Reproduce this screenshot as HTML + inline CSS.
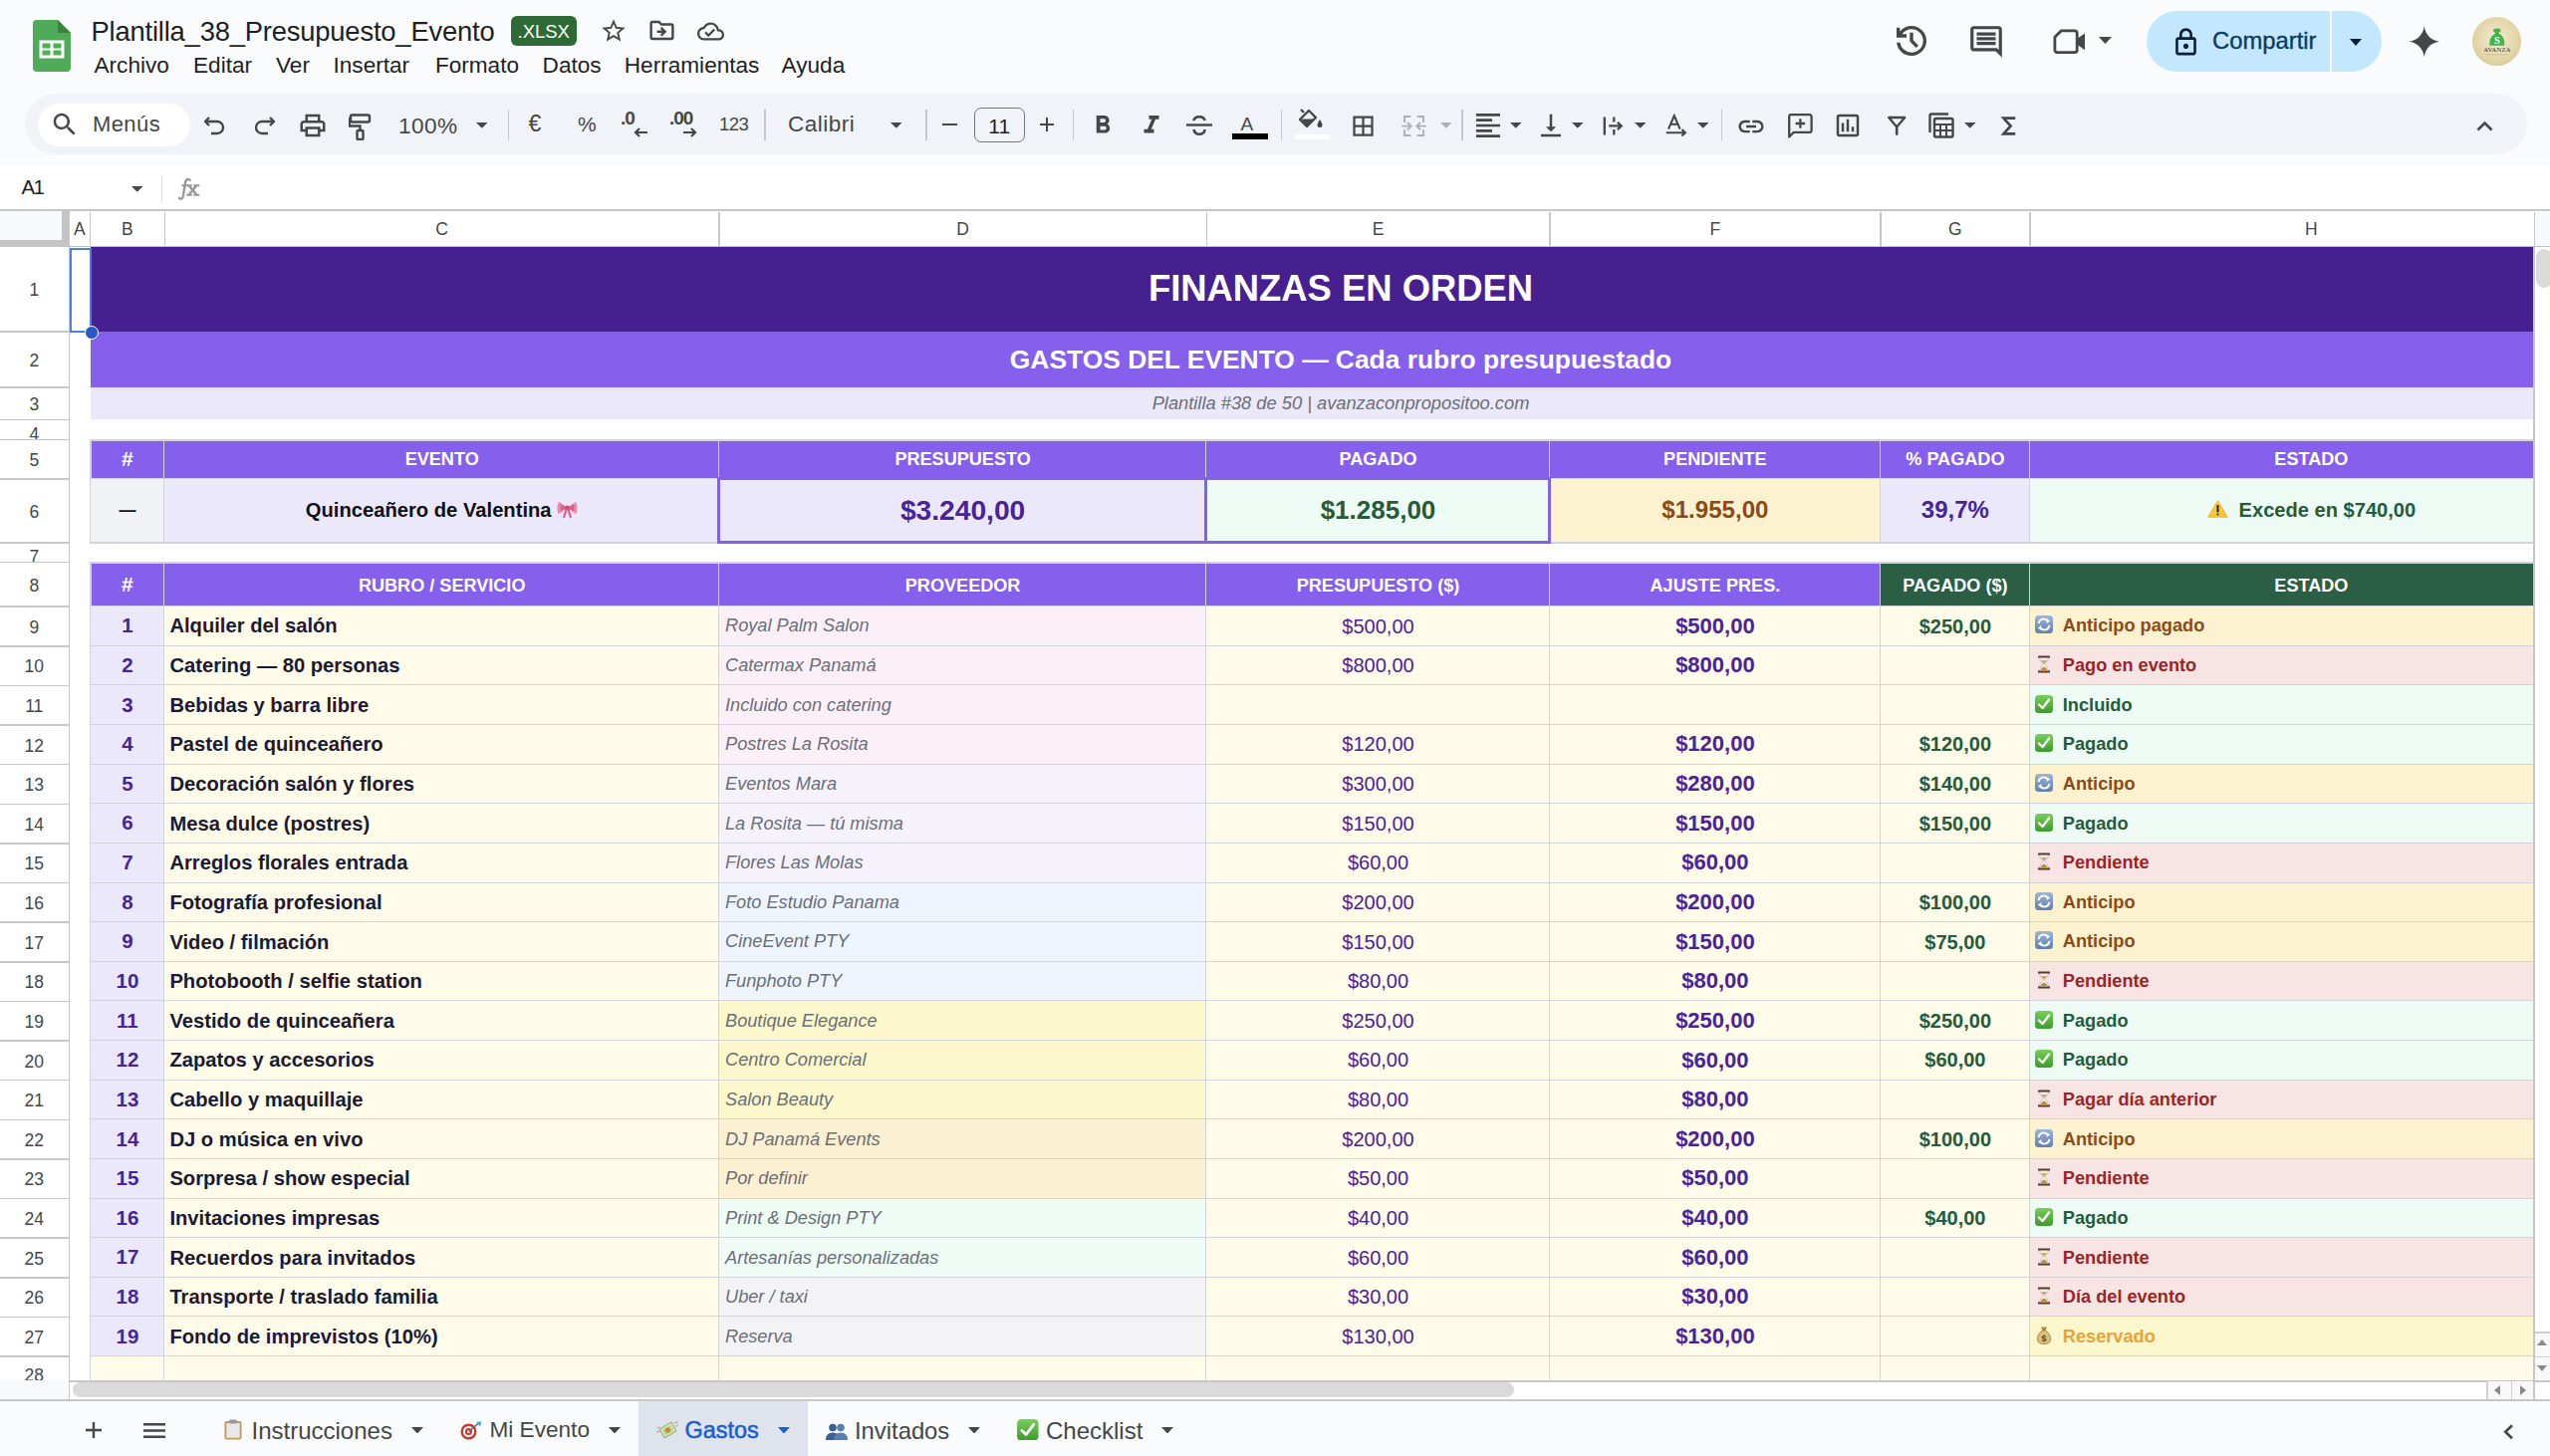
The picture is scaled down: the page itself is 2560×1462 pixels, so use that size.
<!DOCTYPE html><html><head><meta charset="utf-8"><style>
*{margin:0;padding:0;box-sizing:border-box}
html,body{width:2560px;height:1462px;overflow:hidden;background:#f9fbfd;font-family:"Liberation Sans",sans-serif;position:relative}
.t{position:absolute;white-space:nowrap;line-height:1}
.cell{position:absolute;display:flex;align-items:center;white-space:nowrap;overflow:hidden}
.c{justify-content:center}
.ic{position:absolute}
</style></head><body>
<div style="position:absolute;left:0.0px;top:167.0px;width:2560.0px;height:44.0px;background:#fff"></div>
<div style="position:absolute;left:0.0px;top:211.0px;width:2560.0px;height:1175.0px;background:#fff"></div>
<div style="position:absolute;left:0.0px;top:210.0px;width:2560.0px;height:2.0px;background:#c7c7c7"></div>
<div style="position:absolute;left:0.0px;top:212.0px;width:69.5px;height:35.5px;background:#c4c4c4"></div>
<div style="position:absolute;left:0.0px;top:212.0px;width:62.4px;height:29.2px;background:#f8f9fa"></div>
<div style="position:absolute;left:69.0px;top:246.5px;width:2491.0px;height:1.5px;background:#c0c0c0"></div>
<div style="position:absolute;left:68.7px;top:213.0px;width:1.5px;height:34.0px;background:#c7c7c7"></div>
<div class="t" style="left:69.4px;top:221.85px;width:21.099999999999994px;text-align:center;font-size:17.5px;color:#444746">A</div>
<div style="position:absolute;left:89.8px;top:213.0px;width:1.5px;height:34.0px;background:#c7c7c7"></div>
<div class="t" style="left:90.5px;top:221.85px;width:74.9px;text-align:center;font-size:17.5px;color:#444746">B</div>
<div style="position:absolute;left:164.7px;top:213.0px;width:1.5px;height:34.0px;background:#c7c7c7"></div>
<div class="t" style="left:165.4px;top:221.85px;width:556.6px;text-align:center;font-size:17.5px;color:#444746">C</div>
<div style="position:absolute;left:721.2px;top:213.0px;width:1.5px;height:34.0px;background:#c7c7c7"></div>
<div class="t" style="left:722px;top:221.85px;width:489.29999999999995px;text-align:center;font-size:17.5px;color:#444746">D</div>
<div style="position:absolute;left:1210.5px;top:213.0px;width:1.5px;height:34.0px;background:#c7c7c7"></div>
<div class="t" style="left:1211.3px;top:221.85px;width:344.5px;text-align:center;font-size:17.5px;color:#444746">E</div>
<div style="position:absolute;left:1555.0px;top:213.0px;width:1.5px;height:34.0px;background:#c7c7c7"></div>
<div class="t" style="left:1555.8px;top:221.85px;width:332.20000000000005px;text-align:center;font-size:17.5px;color:#444746">F</div>
<div style="position:absolute;left:1887.2px;top:213.0px;width:1.5px;height:34.0px;background:#c7c7c7"></div>
<div class="t" style="left:1888px;top:221.85px;width:149.79999999999995px;text-align:center;font-size:17.5px;color:#444746">G</div>
<div style="position:absolute;left:2037.0px;top:213.0px;width:1.5px;height:34.0px;background:#c7c7c7"></div>
<div class="t" style="left:2037.8px;top:221.85px;width:565.2px;text-align:center;font-size:17.5px;color:#444746">H</div>
<div style="position:absolute;left:2543.5px;top:213.0px;width:1.5px;height:34.0px;background:#c7c7c7"></div>
<div style="position:absolute;left:68.5px;top:248.0px;width:1.5px;height:1138.0px;background:#c7c7c7"></div>
<div style="position:absolute;left:0.0px;top:332.1px;width:69.0px;height:1.5px;background:#c7c7c7"></div>
<div class="t" style="left:0;top:282.90px;width:68.5px;height:49.15px;overflow:hidden;text-align:center;font-size:17.5px;color:#444746">1</div>
<div style="position:absolute;left:0.0px;top:388.2px;width:69.0px;height:1.5px;background:#c7c7c7"></div>
<div class="t" style="left:0;top:353.65px;width:68.5px;height:34.60px;overflow:hidden;text-align:center;font-size:17.5px;color:#444746">2</div>
<div style="position:absolute;left:0.0px;top:420.5px;width:69.0px;height:1.5px;background:#c7c7c7"></div>
<div class="t" style="left:0;top:397.88px;width:68.5px;height:22.62px;overflow:hidden;text-align:center;font-size:17.5px;color:#444746">3</div>
<div style="position:absolute;left:0.0px;top:440.9px;width:69.0px;height:1.5px;background:#c7c7c7"></div>
<div class="t" style="left:0;top:427.60px;width:68.5px;height:13.25px;overflow:hidden;text-align:center;font-size:17.5px;color:#444746">4</div>
<div style="position:absolute;left:0.0px;top:480.1px;width:69.0px;height:1.5px;background:#c7c7c7"></div>
<div class="t" style="left:0;top:453.95px;width:68.5px;height:26.10px;overflow:hidden;text-align:center;font-size:17.5px;color:#444746">5</div>
<div style="position:absolute;left:0.0px;top:544.0px;width:69.0px;height:1.5px;background:#c7c7c7"></div>
<div class="t" style="left:0;top:505.50px;width:68.5px;height:38.45px;overflow:hidden;text-align:center;font-size:17.5px;color:#444746">6</div>
<div style="position:absolute;left:0.0px;top:563.9px;width:69.0px;height:1.5px;background:#c7c7c7"></div>
<div class="t" style="left:0;top:551.05px;width:68.5px;height:12.80px;overflow:hidden;text-align:center;font-size:17.5px;color:#444746">7</div>
<div style="position:absolute;left:0.0px;top:608.4px;width:69.0px;height:1.5px;background:#c7c7c7"></div>
<div class="t" style="left:0;top:579.60px;width:68.5px;height:28.75px;overflow:hidden;text-align:center;font-size:17.5px;color:#444746">8</div>
<div style="position:absolute;left:0.0px;top:648.0px;width:69.0px;height:1.5px;background:#c7c7c7"></div>
<div class="t" style="left:0;top:621.65px;width:68.5px;height:26.30px;overflow:hidden;text-align:center;font-size:17.5px;color:#444746">9</div>
<div style="position:absolute;left:0.0px;top:687.6px;width:69.0px;height:1.5px;background:#c7c7c7"></div>
<div class="t" style="left:0;top:661.27px;width:68.5px;height:26.31px;overflow:hidden;text-align:center;font-size:17.5px;color:#444746">10</div>
<div style="position:absolute;left:0.0px;top:727.2px;width:69.0px;height:1.5px;background:#c7c7c7"></div>
<div class="t" style="left:0;top:700.90px;width:68.5px;height:26.31px;overflow:hidden;text-align:center;font-size:17.5px;color:#444746">11</div>
<div style="position:absolute;left:0.0px;top:766.8px;width:69.0px;height:1.5px;background:#c7c7c7"></div>
<div class="t" style="left:0;top:740.53px;width:68.5px;height:26.31px;overflow:hidden;text-align:center;font-size:17.5px;color:#444746">12</div>
<div style="position:absolute;left:0.0px;top:806.5px;width:69.0px;height:1.5px;background:#c7c7c7"></div>
<div class="t" style="left:0;top:780.16px;width:68.5px;height:26.31px;overflow:hidden;text-align:center;font-size:17.5px;color:#444746">13</div>
<div style="position:absolute;left:0.0px;top:846.1px;width:69.0px;height:1.5px;background:#c7c7c7"></div>
<div class="t" style="left:0;top:819.79px;width:68.5px;height:26.31px;overflow:hidden;text-align:center;font-size:17.5px;color:#444746">14</div>
<div style="position:absolute;left:0.0px;top:885.7px;width:69.0px;height:1.5px;background:#c7c7c7"></div>
<div class="t" style="left:0;top:859.42px;width:68.5px;height:26.31px;overflow:hidden;text-align:center;font-size:17.5px;color:#444746">15</div>
<div style="position:absolute;left:0.0px;top:925.4px;width:69.0px;height:1.5px;background:#c7c7c7"></div>
<div class="t" style="left:0;top:899.05px;width:68.5px;height:26.31px;overflow:hidden;text-align:center;font-size:17.5px;color:#444746">16</div>
<div style="position:absolute;left:0.0px;top:965.0px;width:69.0px;height:1.5px;background:#c7c7c7"></div>
<div class="t" style="left:0;top:938.68px;width:68.5px;height:26.31px;overflow:hidden;text-align:center;font-size:17.5px;color:#444746">17</div>
<div style="position:absolute;left:0.0px;top:1004.6px;width:69.0px;height:1.5px;background:#c7c7c7"></div>
<div class="t" style="left:0;top:978.31px;width:68.5px;height:26.31px;overflow:hidden;text-align:center;font-size:17.5px;color:#444746">18</div>
<div style="position:absolute;left:0.0px;top:1044.2px;width:69.0px;height:1.5px;background:#c7c7c7"></div>
<div class="t" style="left:0;top:1017.94px;width:68.5px;height:26.31px;overflow:hidden;text-align:center;font-size:17.5px;color:#444746">19</div>
<div style="position:absolute;left:0.0px;top:1083.9px;width:69.0px;height:1.5px;background:#c7c7c7"></div>
<div class="t" style="left:0;top:1057.57px;width:68.5px;height:26.31px;overflow:hidden;text-align:center;font-size:17.5px;color:#444746">20</div>
<div style="position:absolute;left:0.0px;top:1123.5px;width:69.0px;height:1.5px;background:#c7c7c7"></div>
<div class="t" style="left:0;top:1097.20px;width:68.5px;height:26.31px;overflow:hidden;text-align:center;font-size:17.5px;color:#444746">21</div>
<div style="position:absolute;left:0.0px;top:1163.1px;width:69.0px;height:1.5px;background:#c7c7c7"></div>
<div class="t" style="left:0;top:1136.83px;width:68.5px;height:26.31px;overflow:hidden;text-align:center;font-size:17.5px;color:#444746">22</div>
<div style="position:absolute;left:0.0px;top:1202.8px;width:69.0px;height:1.5px;background:#c7c7c7"></div>
<div class="t" style="left:0;top:1176.46px;width:68.5px;height:26.31px;overflow:hidden;text-align:center;font-size:17.5px;color:#444746">23</div>
<div style="position:absolute;left:0.0px;top:1242.4px;width:69.0px;height:1.5px;background:#c7c7c7"></div>
<div class="t" style="left:0;top:1216.09px;width:68.5px;height:26.31px;overflow:hidden;text-align:center;font-size:17.5px;color:#444746">24</div>
<div style="position:absolute;left:0.0px;top:1282.0px;width:69.0px;height:1.5px;background:#c7c7c7"></div>
<div class="t" style="left:0;top:1255.72px;width:68.5px;height:26.31px;overflow:hidden;text-align:center;font-size:17.5px;color:#444746">25</div>
<div style="position:absolute;left:0.0px;top:1321.7px;width:69.0px;height:1.5px;background:#c7c7c7"></div>
<div class="t" style="left:0;top:1295.35px;width:68.5px;height:26.31px;overflow:hidden;text-align:center;font-size:17.5px;color:#444746">26</div>
<div style="position:absolute;left:0.0px;top:1361.3px;width:69.0px;height:1.5px;background:#c7c7c7"></div>
<div class="t" style="left:0;top:1334.98px;width:68.5px;height:26.31px;overflow:hidden;text-align:center;font-size:17.5px;color:#444746">27</div>
<div style="position:absolute;left:0.0px;top:1400.9px;width:69.0px;height:1.5px;background:#c7c7c7"></div>
<div class="t" style="left:0;top:1372.75px;width:68.5px;height:28.17px;overflow:hidden;text-align:center;font-size:17.5px;color:#444746">28</div>
<div style="position:absolute;left:90.5px;top:248.0px;width:2453.0px;height:84.8px;background:#47208f"></div>
<div class="t" style="left:946px;top:272.2px;width:800px;text-align:center;color:#fff;font-weight:bold;font-size:36.4px">FINANZAS EN ORDEN</div>
<div style="position:absolute;left:90.5px;top:332.8px;width:2453.0px;height:56.2px;background:#8560ec"></div>
<div class="t" style="left:946px;top:347.8px;width:800px;text-align:center;color:#fff;font-weight:bold;font-size:26.4px">GASTOS DEL EVENTO — Cada rubro presupuestado</div>
<div style="position:absolute;left:90.5px;top:389.0px;width:2453.0px;height:32.2px;background:#ece8fb"></div>
<div class="t" style="left:946px;top:396.1px;width:800px;text-align:center;color:#6b6f76;font-style:italic;font-size:18.3px">Plantilla #38 de 50 | avanzaconpropositoo.com</div>
<div style="position:absolute;left:90.5px;top:441.6px;width:74.9px;height:39.2px;background:#8560ec"></div>
<div style="position:absolute;left:164.4px;top:440.6px;width:2.0px;height:41.2px;background:#d3d3dc"></div>
<div style="position:absolute;left:89.5px;top:479.8px;width:76.9px;height:2.0px;background:#d3d3dc"></div>
<div class="t" style="left:-272.1px;top:449.9px;width:800px;text-align:center;font-size:21px;color:#fff;font-weight:bold">#</div>
<div style="position:absolute;left:165.4px;top:441.6px;width:556.6px;height:39.2px;background:#8560ec"></div>
<div style="position:absolute;left:721.0px;top:440.6px;width:2.0px;height:41.2px;background:#d3d3dc"></div>
<div style="position:absolute;left:164.4px;top:479.8px;width:558.6px;height:2.0px;background:#d3d3dc"></div>
<div class="t" style="left:43.7px;top:452.4px;width:800px;text-align:center;font-size:18.1px;color:#fff;font-weight:bold">EVENTO</div>
<div style="position:absolute;left:722.0px;top:441.6px;width:489.3px;height:39.2px;background:#8560ec"></div>
<div style="position:absolute;left:1210.3px;top:440.6px;width:2.0px;height:41.2px;background:#d3d3dc"></div>
<div style="position:absolute;left:721.0px;top:479.8px;width:491.3px;height:2.0px;background:#d3d3dc"></div>
<div class="t" style="left:566.6px;top:452.4px;width:800px;text-align:center;font-size:18.1px;color:#fff;font-weight:bold">PRESUPUESTO</div>
<div style="position:absolute;left:1211.3px;top:441.6px;width:344.5px;height:39.2px;background:#8560ec"></div>
<div style="position:absolute;left:1554.8px;top:440.6px;width:2.0px;height:41.2px;background:#d3d3dc"></div>
<div style="position:absolute;left:1210.3px;top:479.8px;width:346.5px;height:2.0px;background:#d3d3dc"></div>
<div class="t" style="left:983.5px;top:452.4px;width:800px;text-align:center;font-size:18.1px;color:#fff;font-weight:bold">PAGADO</div>
<div style="position:absolute;left:1555.8px;top:441.6px;width:332.2px;height:39.2px;background:#8560ec"></div>
<div style="position:absolute;left:1887.0px;top:440.6px;width:2.0px;height:41.2px;background:#d3d3dc"></div>
<div style="position:absolute;left:1554.8px;top:479.8px;width:334.2px;height:2.0px;background:#d3d3dc"></div>
<div class="t" style="left:1321.9px;top:452.4px;width:800px;text-align:center;font-size:18.1px;color:#fff;font-weight:bold">PENDIENTE</div>
<div style="position:absolute;left:1888.0px;top:441.6px;width:149.8px;height:39.2px;background:#8560ec"></div>
<div style="position:absolute;left:2036.8px;top:440.6px;width:2.0px;height:41.2px;background:#d3d3dc"></div>
<div style="position:absolute;left:1887.0px;top:479.8px;width:151.8px;height:2.0px;background:#d3d3dc"></div>
<div class="t" style="left:1562.9px;top:452.4px;width:800px;text-align:center;font-size:18.1px;color:#fff;font-weight:bold">% PAGADO</div>
<div style="position:absolute;left:2037.8px;top:441.6px;width:505.7px;height:39.2px;background:#8560ec"></div>
<div style="position:absolute;left:2542.5px;top:440.6px;width:2.0px;height:41.2px;background:#d3d3dc"></div>
<div style="position:absolute;left:2036.8px;top:479.8px;width:507.7px;height:2.0px;background:#d3d3dc"></div>
<div class="t" style="left:1920.4px;top:452.4px;width:800px;text-align:center;font-size:18.1px;color:#fff;font-weight:bold">ESTADO</div>
<div style="position:absolute;left:89.5px;top:440.6px;width:2454.0px;height:2.0px;background:#d3d3dc"></div>
<div style="position:absolute;left:89.5px;top:440.6px;width:2.0px;height:105.0px;background:#d3d3dc"></div>
<div style="position:absolute;left:90.5px;top:480.8px;width:74.9px;height:63.9px;background:#f1f2f5"></div>
<div style="position:absolute;left:164.4px;top:479.8px;width:2.0px;height:65.9px;background:#d3d3dc"></div>
<div style="position:absolute;left:89.5px;top:543.7px;width:76.9px;height:2.0px;background:#d3d3dc"></div>
<div class="t" style="left:-272.1px;top:503.8px;width:800px;text-align:center;font-size:17px;color:#111;font-weight:bold">—</div>
<div style="position:absolute;left:165.4px;top:480.8px;width:556.6px;height:63.9px;background:#ece8fb"></div>
<div style="position:absolute;left:721.0px;top:479.8px;width:2.0px;height:65.9px;background:#d3d3dc"></div>
<div style="position:absolute;left:164.4px;top:543.7px;width:558.6px;height:2.0px;background:#d3d3dc"></div>
<div class="t" style="left:43.7px;top:502.3px;width:800px;text-align:center;font-size:20.2px;color:#111;font-weight:bold">Quinceañero de Valentina<svg width="23" height="19" viewBox="0 0 23 19" style="vertical-align:-2px;margin-left:4px"><path d="M11.5 8 L3 1.5 Q0 8 2.5 14.5 Z" fill="#eb8db0"/><path d="M11.5 8 L20 1.5 Q23 8 20.5 14.5 Z" fill="#eb8db0"/><path d="M11.5 8 L5 4 Q4 8 5 11.5 Z M11.5 8 L18 4 Q19 8 18 11.5 Z" fill="#d9638d"/><circle cx="11.5" cy="8" r="2.5" fill="#c94f7a"/><path d="M10.5 9.5 L8 18 M12.5 9.5 L15 18" stroke="#d9638d" stroke-width="2.2"/></svg></div>
<div style="position:absolute;left:722.0px;top:480.8px;width:489.3px;height:63.9px;background:#ece8fb"></div>
<div style="position:absolute;left:1210.3px;top:479.8px;width:2.0px;height:65.9px;background:#d3d3dc"></div>
<div style="position:absolute;left:721.0px;top:543.7px;width:491.3px;height:2.0px;background:#d3d3dc"></div>
<div class="t" style="left:566.6px;top:498.4px;width:800px;text-align:center;font-size:28.2px;color:#4a2398;font-weight:bold">$3.240,00</div>
<div style="position:absolute;left:1211.3px;top:480.8px;width:344.5px;height:63.9px;background:#eefbf4"></div>
<div style="position:absolute;left:1554.8px;top:479.8px;width:2.0px;height:65.9px;background:#d3d3dc"></div>
<div style="position:absolute;left:1210.3px;top:543.7px;width:346.5px;height:2.0px;background:#d3d3dc"></div>
<div class="t" style="left:983.5px;top:499.4px;width:800px;text-align:center;font-size:26px;color:#245c3b;font-weight:bold">$1.285,00</div>
<div style="position:absolute;left:1555.8px;top:480.8px;width:332.2px;height:63.9px;background:#fcf2d0"></div>
<div style="position:absolute;left:1887.0px;top:479.8px;width:2.0px;height:65.9px;background:#d3d3dc"></div>
<div style="position:absolute;left:1554.8px;top:543.7px;width:334.2px;height:2.0px;background:#d3d3dc"></div>
<div class="t" style="left:1321.9px;top:500.4px;width:800px;text-align:center;font-size:24.1px;color:#8c4a17;font-weight:bold">$1.955,00</div>
<div style="position:absolute;left:1888.0px;top:480.8px;width:149.8px;height:63.9px;background:#ece8fb"></div>
<div style="position:absolute;left:2036.8px;top:479.8px;width:2.0px;height:65.9px;background:#d3d3dc"></div>
<div style="position:absolute;left:1887.0px;top:543.7px;width:151.8px;height:2.0px;background:#d3d3dc"></div>
<div class="t" style="left:1562.9px;top:500.4px;width:800px;text-align:center;font-size:24px;color:#4a2398;font-weight:bold">39,7%</div>
<div style="position:absolute;left:2037.8px;top:480.8px;width:505.7px;height:63.9px;background:#eefbf4"></div>
<div style="position:absolute;left:2542.5px;top:479.8px;width:2.0px;height:65.9px;background:#d3d3dc"></div>
<div style="position:absolute;left:2036.8px;top:543.7px;width:507.7px;height:2.0px;background:#d3d3dc"></div>
<div class="t" style="left:1920.4px;top:502.3px;width:800px;text-align:center;font-size:20.1px;color:#245c3b;font-weight:bold"><svg width="21" height="18" viewBox="0 0 21 18" style="vertical-align:-1px;margin-right:11px"><path d="M10.5 0.8 L20.3 17.2 L0.7 17.2 Z" fill="#f5c63a" stroke="#f0b52a" stroke-width="1" stroke-linejoin="round"/><rect x="9.5" y="5" width="2" height="7.5" rx="0.8" fill="#222"/><rect x="9.5" y="13.6" width="2" height="2" rx="1" fill="#222"/></svg>Excede en $740,00</div>
<div style="position:absolute;left:719.9px;top:479.3px;width:837.4px;height:66.5px;border:3px solid #8361e6"></div>
<div style="position:absolute;left:1209.1px;top:479.3px;width:3.0px;height:66.5px;background:#8361e6"></div>
<div style="position:absolute;left:90.5px;top:564.6px;width:74.9px;height:44.5px;background:#8560ec"></div>
<div style="position:absolute;left:164.4px;top:563.6px;width:2.0px;height:46.5px;background:#d3d3dc"></div>
<div style="position:absolute;left:89.5px;top:608.1px;width:76.9px;height:2.0px;background:#d3d3dc"></div>
<div class="t" style="left:-272.1px;top:576.1px;width:800px;text-align:center;font-size:21px;color:#fff;font-weight:bold">#</div>
<div style="position:absolute;left:165.4px;top:564.6px;width:556.6px;height:44.5px;background:#8560ec"></div>
<div style="position:absolute;left:721.0px;top:563.6px;width:2.0px;height:46.5px;background:#d3d3dc"></div>
<div style="position:absolute;left:164.4px;top:608.1px;width:558.6px;height:2.0px;background:#d3d3dc"></div>
<div class="t" style="left:43.7px;top:578.5px;width:800px;text-align:center;font-size:18.1px;color:#fff;font-weight:bold">RUBRO / SERVICIO</div>
<div style="position:absolute;left:722.0px;top:564.6px;width:489.3px;height:44.5px;background:#8560ec"></div>
<div style="position:absolute;left:1210.3px;top:563.6px;width:2.0px;height:46.5px;background:#d3d3dc"></div>
<div style="position:absolute;left:721.0px;top:608.1px;width:491.3px;height:2.0px;background:#d3d3dc"></div>
<div class="t" style="left:566.6px;top:578.5px;width:800px;text-align:center;font-size:18.1px;color:#fff;font-weight:bold">PROVEEDOR</div>
<div style="position:absolute;left:1211.3px;top:564.6px;width:344.5px;height:44.5px;background:#8560ec"></div>
<div style="position:absolute;left:1554.8px;top:563.6px;width:2.0px;height:46.5px;background:#d3d3dc"></div>
<div style="position:absolute;left:1210.3px;top:608.1px;width:346.5px;height:2.0px;background:#d3d3dc"></div>
<div class="t" style="left:983.5px;top:578.5px;width:800px;text-align:center;font-size:18.1px;color:#fff;font-weight:bold">PRESUPUESTO ($)</div>
<div style="position:absolute;left:1555.8px;top:564.6px;width:332.2px;height:44.5px;background:#8560ec"></div>
<div style="position:absolute;left:1887.0px;top:563.6px;width:2.0px;height:46.5px;background:#d3d3dc"></div>
<div style="position:absolute;left:1554.8px;top:608.1px;width:334.2px;height:2.0px;background:#d3d3dc"></div>
<div class="t" style="left:1321.9px;top:578.5px;width:800px;text-align:center;font-size:18.1px;color:#fff;font-weight:bold">AJUSTE PRES.</div>
<div style="position:absolute;left:1888.0px;top:564.6px;width:149.8px;height:44.5px;background:#2a5e45"></div>
<div style="position:absolute;left:2036.8px;top:563.6px;width:2.0px;height:46.5px;background:#d3d3dc"></div>
<div style="position:absolute;left:1887.0px;top:608.1px;width:151.8px;height:2.0px;background:#d3d3dc"></div>
<div class="t" style="left:1562.9px;top:578.5px;width:800px;text-align:center;font-size:18.1px;color:#fff;font-weight:bold">PAGADO ($)</div>
<div style="position:absolute;left:2037.8px;top:564.6px;width:505.7px;height:44.5px;background:#2a5e45"></div>
<div style="position:absolute;left:2542.5px;top:563.6px;width:2.0px;height:46.5px;background:#d3d3dc"></div>
<div style="position:absolute;left:2036.8px;top:608.1px;width:507.7px;height:2.0px;background:#d3d3dc"></div>
<div class="t" style="left:1920.4px;top:578.5px;width:800px;text-align:center;font-size:18.1px;color:#fff;font-weight:bold">ESTADO</div>
<div style="position:absolute;left:89.5px;top:563.6px;width:2454.0px;height:2.0px;background:#d3d3dc"></div>
<div style="position:absolute;left:89.5px;top:563.6px;width:2.0px;height:823.0px;background:#d3d3dc"></div>
<div style="position:absolute;left:90.5px;top:609.1px;width:74.9px;height:39.6px;background:#ece8fb"></div>
<div style="position:absolute;left:164.4px;top:608.1px;width:2.0px;height:41.6px;background:#d3d3dc"></div>
<div style="position:absolute;left:89.5px;top:647.7px;width:76.9px;height:2.0px;background:#d3d3dc"></div>
<div class="t" style="left:-272.1px;top:618.3px;width:800px;text-align:center;font-size:20.5px;color:#4a2398;font-weight:bold">1</div>
<div style="position:absolute;left:165.4px;top:609.1px;width:556.6px;height:39.6px;background:#fefbe9"></div>
<div style="position:absolute;left:721.0px;top:608.1px;width:2.0px;height:41.6px;background:#d3d3dc"></div>
<div style="position:absolute;left:164.4px;top:647.7px;width:558.6px;height:2.0px;background:#d3d3dc"></div>
<div class="t" style="left:170.4px;top:618.4px;font-size:20.2px;color:#1c1a33;font-weight:bold">Alquiler del salón</div>
<div style="position:absolute;left:722.0px;top:609.1px;width:489.3px;height:39.6px;background:#fbf0f7"></div>
<div style="position:absolute;left:1210.3px;top:608.1px;width:2.0px;height:41.6px;background:#d3d3dc"></div>
<div style="position:absolute;left:721.0px;top:647.7px;width:491.3px;height:2.0px;background:#d3d3dc"></div>
<div class="t" style="left:728.0px;top:619.4px;font-size:18.2px;color:#6b6f78;font-style:italic">Royal Palm Salon</div>
<div style="position:absolute;left:1211.3px;top:609.1px;width:344.5px;height:39.6px;background:#fefbe9"></div>
<div style="position:absolute;left:1554.8px;top:608.1px;width:2.0px;height:41.6px;background:#d3d3dc"></div>
<div style="position:absolute;left:1210.3px;top:647.7px;width:346.5px;height:2.0px;background:#d3d3dc"></div>
<div class="t" style="left:983.5px;top:618.5px;width:800px;text-align:center;font-size:20px;color:#4a2398">$500,00</div>
<div style="position:absolute;left:1555.8px;top:609.1px;width:332.2px;height:39.6px;background:#fefbe9"></div>
<div style="position:absolute;left:1887.0px;top:608.1px;width:2.0px;height:41.6px;background:#d3d3dc"></div>
<div style="position:absolute;left:1554.8px;top:647.7px;width:334.2px;height:2.0px;background:#d3d3dc"></div>
<div class="t" style="left:1321.9px;top:617.6px;width:800px;text-align:center;font-size:22px;color:#4a2398;font-weight:bold">$500,00</div>
<div style="position:absolute;left:1888.0px;top:609.1px;width:149.8px;height:39.6px;background:#fefbe9"></div>
<div style="position:absolute;left:2036.8px;top:608.1px;width:2.0px;height:41.6px;background:#d3d3dc"></div>
<div style="position:absolute;left:1887.0px;top:647.7px;width:151.8px;height:2.0px;background:#d3d3dc"></div>
<div class="t" style="left:1562.9px;top:618.5px;width:800px;text-align:center;font-size:20px;color:#245c3b;font-weight:bold">$250,00</div>
<div style="position:absolute;left:2037.8px;top:609.1px;width:505.7px;height:39.6px;background:#fcf2d0"></div>
<div style="position:absolute;left:2542.5px;top:608.1px;width:2.0px;height:41.6px;background:#d3d3dc"></div>
<div style="position:absolute;left:2036.8px;top:647.7px;width:507.7px;height:2.0px;background:#d3d3dc"></div>
<div class="t" style="left:2042.8px;top:618.4px;font-size:18.2px;color:#8c4a17;font-weight:bold"><svg width="18" height="18" viewBox="0 0 18 18" style="vertical-align:-2px;margin-right:10px"><defs><linearGradient id="gs" x1="0" y1="0" x2="0" y2="1"><stop offset="0" stop-color="#9db5d8"/><stop offset="1" stop-color="#5f7fae"/></linearGradient></defs><rect x="0" y="0" width="18" height="18" rx="3.5" fill="url(#gs)"/><path d="M3.6 8.2 A5.2 5.2 0 0 1 13 5.6" stroke="#fff" stroke-width="2" fill="none"/><path d="M14.4 9.8 A5.2 5.2 0 0 1 5 12.4" stroke="#fff" stroke-width="2" fill="none"/><path d="M11.2 3.2 L15.2 5.2 L11.8 8 Z" fill="#fff"/><path d="M6.8 14.8 L2.8 12.8 L6.2 10 Z" fill="#fff"/></svg>Anticipo pagado</div>
<div style="position:absolute;left:90.5px;top:648.7px;width:74.9px;height:39.6px;background:#ece8fb"></div>
<div style="position:absolute;left:164.4px;top:647.7px;width:2.0px;height:41.6px;background:#d3d3dc"></div>
<div style="position:absolute;left:89.5px;top:687.3px;width:76.9px;height:2.0px;background:#d3d3dc"></div>
<div class="t" style="left:-272.1px;top:657.9px;width:800px;text-align:center;font-size:20.5px;color:#4a2398;font-weight:bold">2</div>
<div style="position:absolute;left:165.4px;top:648.7px;width:556.6px;height:39.6px;background:#fefbe9"></div>
<div style="position:absolute;left:721.0px;top:647.7px;width:2.0px;height:41.6px;background:#d3d3dc"></div>
<div style="position:absolute;left:164.4px;top:687.3px;width:558.6px;height:2.0px;background:#d3d3dc"></div>
<div class="t" style="left:170.4px;top:658.0px;font-size:20.2px;color:#1c1a33;font-weight:bold">Catering — 80 personas</div>
<div style="position:absolute;left:722.0px;top:648.7px;width:489.3px;height:39.6px;background:#fbf0f7"></div>
<div style="position:absolute;left:1210.3px;top:647.7px;width:2.0px;height:41.6px;background:#d3d3dc"></div>
<div style="position:absolute;left:721.0px;top:687.3px;width:491.3px;height:2.0px;background:#d3d3dc"></div>
<div class="t" style="left:728.0px;top:659.0px;font-size:18.2px;color:#6b6f78;font-style:italic">Catermax Panamá</div>
<div style="position:absolute;left:1211.3px;top:648.7px;width:344.5px;height:39.6px;background:#fefbe9"></div>
<div style="position:absolute;left:1554.8px;top:647.7px;width:2.0px;height:41.6px;background:#d3d3dc"></div>
<div style="position:absolute;left:1210.3px;top:687.3px;width:346.5px;height:2.0px;background:#d3d3dc"></div>
<div class="t" style="left:983.5px;top:658.1px;width:800px;text-align:center;font-size:20px;color:#4a2398">$800,00</div>
<div style="position:absolute;left:1555.8px;top:648.7px;width:332.2px;height:39.6px;background:#fefbe9"></div>
<div style="position:absolute;left:1887.0px;top:647.7px;width:2.0px;height:41.6px;background:#d3d3dc"></div>
<div style="position:absolute;left:1554.8px;top:687.3px;width:334.2px;height:2.0px;background:#d3d3dc"></div>
<div class="t" style="left:1321.9px;top:657.2px;width:800px;text-align:center;font-size:22px;color:#4a2398;font-weight:bold">$800,00</div>
<div style="position:absolute;left:1888.0px;top:648.7px;width:149.8px;height:39.6px;background:#fefbe9"></div>
<div style="position:absolute;left:2036.8px;top:647.7px;width:2.0px;height:41.6px;background:#d3d3dc"></div>
<div style="position:absolute;left:1887.0px;top:687.3px;width:151.8px;height:2.0px;background:#d3d3dc"></div>
<div class="t" style="left:1562.9px;top:658.1px;width:800px;text-align:center;font-size:20px;color:#245c3b;font-weight:bold"></div>
<div style="position:absolute;left:2037.8px;top:648.7px;width:505.7px;height:39.6px;background:#f9e4e4"></div>
<div style="position:absolute;left:2542.5px;top:647.7px;width:2.0px;height:41.6px;background:#d3d3dc"></div>
<div style="position:absolute;left:2036.8px;top:687.3px;width:507.7px;height:2.0px;background:#d3d3dc"></div>
<div class="t" style="left:2042.8px;top:658.0px;font-size:18.2px;color:#9a2525;font-weight:bold"><svg width="18" height="18" viewBox="0 0 18 18" style="vertical-align:-2px;margin-right:10px"><rect x="3" y="0.5" width="12" height="2.2" rx="0.6" fill="#5a3a22"/><rect x="3" y="15.3" width="12" height="2.2" rx="0.6" fill="#5a3a22"/><path d="M4.5 2.7 L13.5 2.7 Q13 7 9.6 9 Q13 11 13.5 15.3 L4.5 15.3 Q5 11 8.4 9 Q5 7 4.5 2.7 Z" fill="#f2f2f2" stroke="#aaa" stroke-width="0.6"/><path d="M6.2 5 L11.8 5 Q11 7.5 9 8.6 Q7 7.5 6.2 5 Z" fill="#d8a25e"/><path d="M5.5 15 Q6.5 12 9 11.5 Q11.5 12 12.5 15 Z" fill="#c58a40"/></svg>Pago en evento</div>
<div style="position:absolute;left:90.5px;top:688.3px;width:74.9px;height:39.6px;background:#ece8fb"></div>
<div style="position:absolute;left:164.4px;top:687.3px;width:2.0px;height:41.6px;background:#d3d3dc"></div>
<div style="position:absolute;left:89.5px;top:727.0px;width:76.9px;height:2.0px;background:#d3d3dc"></div>
<div class="t" style="left:-272.1px;top:697.5px;width:800px;text-align:center;font-size:20.5px;color:#4a2398;font-weight:bold">3</div>
<div style="position:absolute;left:165.4px;top:688.3px;width:556.6px;height:39.6px;background:#fefbe9"></div>
<div style="position:absolute;left:721.0px;top:687.3px;width:2.0px;height:41.6px;background:#d3d3dc"></div>
<div style="position:absolute;left:164.4px;top:727.0px;width:558.6px;height:2.0px;background:#d3d3dc"></div>
<div class="t" style="left:170.4px;top:697.7px;font-size:20.2px;color:#1c1a33;font-weight:bold">Bebidas y barra libre</div>
<div style="position:absolute;left:722.0px;top:688.3px;width:489.3px;height:39.6px;background:#fbf0f7"></div>
<div style="position:absolute;left:1210.3px;top:687.3px;width:2.0px;height:41.6px;background:#d3d3dc"></div>
<div style="position:absolute;left:721.0px;top:727.0px;width:491.3px;height:2.0px;background:#d3d3dc"></div>
<div class="t" style="left:728.0px;top:698.7px;font-size:18.2px;color:#6b6f78;font-style:italic">Incluido con catering</div>
<div style="position:absolute;left:1211.3px;top:688.3px;width:344.5px;height:39.6px;background:#fefbe9"></div>
<div style="position:absolute;left:1554.8px;top:687.3px;width:2.0px;height:41.6px;background:#d3d3dc"></div>
<div style="position:absolute;left:1210.3px;top:727.0px;width:346.5px;height:2.0px;background:#d3d3dc"></div>
<div class="t" style="left:983.5px;top:697.8px;width:800px;text-align:center;font-size:20px;color:#4a2398"></div>
<div style="position:absolute;left:1555.8px;top:688.3px;width:332.2px;height:39.6px;background:#fefbe9"></div>
<div style="position:absolute;left:1887.0px;top:687.3px;width:2.0px;height:41.6px;background:#d3d3dc"></div>
<div style="position:absolute;left:1554.8px;top:727.0px;width:334.2px;height:2.0px;background:#d3d3dc"></div>
<div class="t" style="left:1321.9px;top:696.8px;width:800px;text-align:center;font-size:22px;color:#4a2398;font-weight:bold"></div>
<div style="position:absolute;left:1888.0px;top:688.3px;width:149.8px;height:39.6px;background:#fefbe9"></div>
<div style="position:absolute;left:2036.8px;top:687.3px;width:2.0px;height:41.6px;background:#d3d3dc"></div>
<div style="position:absolute;left:1887.0px;top:727.0px;width:151.8px;height:2.0px;background:#d3d3dc"></div>
<div class="t" style="left:1562.9px;top:697.8px;width:800px;text-align:center;font-size:20px;color:#245c3b;font-weight:bold"></div>
<div style="position:absolute;left:2037.8px;top:688.3px;width:505.7px;height:39.6px;background:#edfbf4"></div>
<div style="position:absolute;left:2542.5px;top:687.3px;width:2.0px;height:41.6px;background:#d3d3dc"></div>
<div style="position:absolute;left:2036.8px;top:727.0px;width:507.7px;height:2.0px;background:#d3d3dc"></div>
<div class="t" style="left:2042.8px;top:697.7px;font-size:18.2px;color:#245c3b;font-weight:bold"><svg width="18" height="18" viewBox="0 0 18 18" style="vertical-align:-2px;margin-right:10px"><defs><linearGradient id="gc" x1="0" y1="0" x2="0" y2="1"><stop offset="0" stop-color="#79cf5a"/><stop offset="1" stop-color="#3d9a2c"/></linearGradient></defs><rect x="0" y="0" width="18" height="18" rx="3.5" fill="url(#gc)"/><path d="M4 9.5 L7.6 13 L14 4.5" stroke="#fff" stroke-width="2.3" fill="none" stroke-linecap="round" stroke-linejoin="round"/></svg>Incluido</div>
<div style="position:absolute;left:90.5px;top:728.0px;width:74.9px;height:39.6px;background:#ece8fb"></div>
<div style="position:absolute;left:164.4px;top:727.0px;width:2.0px;height:41.6px;background:#d3d3dc"></div>
<div style="position:absolute;left:89.5px;top:766.6px;width:76.9px;height:2.0px;background:#d3d3dc"></div>
<div class="t" style="left:-272.1px;top:737.2px;width:800px;text-align:center;font-size:20.5px;color:#4a2398;font-weight:bold">4</div>
<div style="position:absolute;left:165.4px;top:728.0px;width:556.6px;height:39.6px;background:#fefbe9"></div>
<div style="position:absolute;left:721.0px;top:727.0px;width:2.0px;height:41.6px;background:#d3d3dc"></div>
<div style="position:absolute;left:164.4px;top:766.6px;width:558.6px;height:2.0px;background:#d3d3dc"></div>
<div class="t" style="left:170.4px;top:737.3px;font-size:20.2px;color:#1c1a33;font-weight:bold">Pastel de quinceañero</div>
<div style="position:absolute;left:722.0px;top:728.0px;width:489.3px;height:39.6px;background:#fbf0f7"></div>
<div style="position:absolute;left:1210.3px;top:727.0px;width:2.0px;height:41.6px;background:#d3d3dc"></div>
<div style="position:absolute;left:721.0px;top:766.6px;width:491.3px;height:2.0px;background:#d3d3dc"></div>
<div class="t" style="left:728.0px;top:738.3px;font-size:18.2px;color:#6b6f78;font-style:italic">Postres La Rosita</div>
<div style="position:absolute;left:1211.3px;top:728.0px;width:344.5px;height:39.6px;background:#fefbe9"></div>
<div style="position:absolute;left:1554.8px;top:727.0px;width:2.0px;height:41.6px;background:#d3d3dc"></div>
<div style="position:absolute;left:1210.3px;top:766.6px;width:346.5px;height:2.0px;background:#d3d3dc"></div>
<div class="t" style="left:983.5px;top:737.4px;width:800px;text-align:center;font-size:20px;color:#4a2398">$120,00</div>
<div style="position:absolute;left:1555.8px;top:728.0px;width:332.2px;height:39.6px;background:#fefbe9"></div>
<div style="position:absolute;left:1887.0px;top:727.0px;width:2.0px;height:41.6px;background:#d3d3dc"></div>
<div style="position:absolute;left:1554.8px;top:766.6px;width:334.2px;height:2.0px;background:#d3d3dc"></div>
<div class="t" style="left:1321.9px;top:736.4px;width:800px;text-align:center;font-size:22px;color:#4a2398;font-weight:bold">$120,00</div>
<div style="position:absolute;left:1888.0px;top:728.0px;width:149.8px;height:39.6px;background:#fefbe9"></div>
<div style="position:absolute;left:2036.8px;top:727.0px;width:2.0px;height:41.6px;background:#d3d3dc"></div>
<div style="position:absolute;left:1887.0px;top:766.6px;width:151.8px;height:2.0px;background:#d3d3dc"></div>
<div class="t" style="left:1562.9px;top:737.4px;width:800px;text-align:center;font-size:20px;color:#245c3b;font-weight:bold">$120,00</div>
<div style="position:absolute;left:2037.8px;top:728.0px;width:505.7px;height:39.6px;background:#edfbf4"></div>
<div style="position:absolute;left:2542.5px;top:727.0px;width:2.0px;height:41.6px;background:#d3d3dc"></div>
<div style="position:absolute;left:2036.8px;top:766.6px;width:507.7px;height:2.0px;background:#d3d3dc"></div>
<div class="t" style="left:2042.8px;top:737.3px;font-size:18.2px;color:#245c3b;font-weight:bold"><svg width="18" height="18" viewBox="0 0 18 18" style="vertical-align:-2px;margin-right:10px"><defs><linearGradient id="gc" x1="0" y1="0" x2="0" y2="1"><stop offset="0" stop-color="#79cf5a"/><stop offset="1" stop-color="#3d9a2c"/></linearGradient></defs><rect x="0" y="0" width="18" height="18" rx="3.5" fill="url(#gc)"/><path d="M4 9.5 L7.6 13 L14 4.5" stroke="#fff" stroke-width="2.3" fill="none" stroke-linecap="round" stroke-linejoin="round"/></svg>Pagado</div>
<div style="position:absolute;left:90.5px;top:767.6px;width:74.9px;height:39.6px;background:#ece8fb"></div>
<div style="position:absolute;left:164.4px;top:766.6px;width:2.0px;height:41.6px;background:#d3d3dc"></div>
<div style="position:absolute;left:89.5px;top:806.2px;width:76.9px;height:2.0px;background:#d3d3dc"></div>
<div class="t" style="left:-272.1px;top:776.8px;width:800px;text-align:center;font-size:20.5px;color:#4a2398;font-weight:bold">5</div>
<div style="position:absolute;left:165.4px;top:767.6px;width:556.6px;height:39.6px;background:#fefbe9"></div>
<div style="position:absolute;left:721.0px;top:766.6px;width:2.0px;height:41.6px;background:#d3d3dc"></div>
<div style="position:absolute;left:164.4px;top:806.2px;width:558.6px;height:2.0px;background:#d3d3dc"></div>
<div class="t" style="left:170.4px;top:776.9px;font-size:20.2px;color:#1c1a33;font-weight:bold">Decoración salón y flores</div>
<div style="position:absolute;left:722.0px;top:767.6px;width:489.3px;height:39.6px;background:#f5f2fc"></div>
<div style="position:absolute;left:1210.3px;top:766.6px;width:2.0px;height:41.6px;background:#d3d3dc"></div>
<div style="position:absolute;left:721.0px;top:806.2px;width:491.3px;height:2.0px;background:#d3d3dc"></div>
<div class="t" style="left:728.0px;top:777.9px;font-size:18.2px;color:#6b6f78;font-style:italic">Eventos Mara</div>
<div style="position:absolute;left:1211.3px;top:767.6px;width:344.5px;height:39.6px;background:#fefbe9"></div>
<div style="position:absolute;left:1554.8px;top:766.6px;width:2.0px;height:41.6px;background:#d3d3dc"></div>
<div style="position:absolute;left:1210.3px;top:806.2px;width:346.5px;height:2.0px;background:#d3d3dc"></div>
<div class="t" style="left:983.5px;top:777.0px;width:800px;text-align:center;font-size:20px;color:#4a2398">$300,00</div>
<div style="position:absolute;left:1555.8px;top:767.6px;width:332.2px;height:39.6px;background:#fefbe9"></div>
<div style="position:absolute;left:1887.0px;top:766.6px;width:2.0px;height:41.6px;background:#d3d3dc"></div>
<div style="position:absolute;left:1554.8px;top:806.2px;width:334.2px;height:2.0px;background:#d3d3dc"></div>
<div class="t" style="left:1321.9px;top:776.1px;width:800px;text-align:center;font-size:22px;color:#4a2398;font-weight:bold">$280,00</div>
<div style="position:absolute;left:1888.0px;top:767.6px;width:149.8px;height:39.6px;background:#fefbe9"></div>
<div style="position:absolute;left:2036.8px;top:766.6px;width:2.0px;height:41.6px;background:#d3d3dc"></div>
<div style="position:absolute;left:1887.0px;top:806.2px;width:151.8px;height:2.0px;background:#d3d3dc"></div>
<div class="t" style="left:1562.9px;top:777.0px;width:800px;text-align:center;font-size:20px;color:#245c3b;font-weight:bold">$140,00</div>
<div style="position:absolute;left:2037.8px;top:767.6px;width:505.7px;height:39.6px;background:#fcf2d0"></div>
<div style="position:absolute;left:2542.5px;top:766.6px;width:2.0px;height:41.6px;background:#d3d3dc"></div>
<div style="position:absolute;left:2036.8px;top:806.2px;width:507.7px;height:2.0px;background:#d3d3dc"></div>
<div class="t" style="left:2042.8px;top:776.9px;font-size:18.2px;color:#8c4a17;font-weight:bold"><svg width="18" height="18" viewBox="0 0 18 18" style="vertical-align:-2px;margin-right:10px"><defs><linearGradient id="gs" x1="0" y1="0" x2="0" y2="1"><stop offset="0" stop-color="#9db5d8"/><stop offset="1" stop-color="#5f7fae"/></linearGradient></defs><rect x="0" y="0" width="18" height="18" rx="3.5" fill="url(#gs)"/><path d="M3.6 8.2 A5.2 5.2 0 0 1 13 5.6" stroke="#fff" stroke-width="2" fill="none"/><path d="M14.4 9.8 A5.2 5.2 0 0 1 5 12.4" stroke="#fff" stroke-width="2" fill="none"/><path d="M11.2 3.2 L15.2 5.2 L11.8 8 Z" fill="#fff"/><path d="M6.8 14.8 L2.8 12.8 L6.2 10 Z" fill="#fff"/></svg>Anticipo</div>
<div style="position:absolute;left:90.5px;top:807.2px;width:74.9px;height:39.6px;background:#ece8fb"></div>
<div style="position:absolute;left:164.4px;top:806.2px;width:2.0px;height:41.6px;background:#d3d3dc"></div>
<div style="position:absolute;left:89.5px;top:845.9px;width:76.9px;height:2.0px;background:#d3d3dc"></div>
<div class="t" style="left:-272.1px;top:816.4px;width:800px;text-align:center;font-size:20.5px;color:#4a2398;font-weight:bold">6</div>
<div style="position:absolute;left:165.4px;top:807.2px;width:556.6px;height:39.6px;background:#fefbe9"></div>
<div style="position:absolute;left:721.0px;top:806.2px;width:2.0px;height:41.6px;background:#d3d3dc"></div>
<div style="position:absolute;left:164.4px;top:845.9px;width:558.6px;height:2.0px;background:#d3d3dc"></div>
<div class="t" style="left:170.4px;top:816.6px;font-size:20.2px;color:#1c1a33;font-weight:bold">Mesa dulce (postres)</div>
<div style="position:absolute;left:722.0px;top:807.2px;width:489.3px;height:39.6px;background:#f5f2fc"></div>
<div style="position:absolute;left:1210.3px;top:806.2px;width:2.0px;height:41.6px;background:#d3d3dc"></div>
<div style="position:absolute;left:721.0px;top:845.9px;width:491.3px;height:2.0px;background:#d3d3dc"></div>
<div class="t" style="left:728.0px;top:817.5px;font-size:18.2px;color:#6b6f78;font-style:italic">La Rosita — tú misma</div>
<div style="position:absolute;left:1211.3px;top:807.2px;width:344.5px;height:39.6px;background:#fefbe9"></div>
<div style="position:absolute;left:1554.8px;top:806.2px;width:2.0px;height:41.6px;background:#d3d3dc"></div>
<div style="position:absolute;left:1210.3px;top:845.9px;width:346.5px;height:2.0px;background:#d3d3dc"></div>
<div class="t" style="left:983.5px;top:816.7px;width:800px;text-align:center;font-size:20px;color:#4a2398">$150,00</div>
<div style="position:absolute;left:1555.8px;top:807.2px;width:332.2px;height:39.6px;background:#fefbe9"></div>
<div style="position:absolute;left:1887.0px;top:806.2px;width:2.0px;height:41.6px;background:#d3d3dc"></div>
<div style="position:absolute;left:1554.8px;top:845.9px;width:334.2px;height:2.0px;background:#d3d3dc"></div>
<div class="t" style="left:1321.9px;top:815.7px;width:800px;text-align:center;font-size:22px;color:#4a2398;font-weight:bold">$150,00</div>
<div style="position:absolute;left:1888.0px;top:807.2px;width:149.8px;height:39.6px;background:#fefbe9"></div>
<div style="position:absolute;left:2036.8px;top:806.2px;width:2.0px;height:41.6px;background:#d3d3dc"></div>
<div style="position:absolute;left:1887.0px;top:845.9px;width:151.8px;height:2.0px;background:#d3d3dc"></div>
<div class="t" style="left:1562.9px;top:816.7px;width:800px;text-align:center;font-size:20px;color:#245c3b;font-weight:bold">$150,00</div>
<div style="position:absolute;left:2037.8px;top:807.2px;width:505.7px;height:39.6px;background:#edfbf4"></div>
<div style="position:absolute;left:2542.5px;top:806.2px;width:2.0px;height:41.6px;background:#d3d3dc"></div>
<div style="position:absolute;left:2036.8px;top:845.9px;width:507.7px;height:2.0px;background:#d3d3dc"></div>
<div class="t" style="left:2042.8px;top:816.5px;font-size:18.2px;color:#245c3b;font-weight:bold"><svg width="18" height="18" viewBox="0 0 18 18" style="vertical-align:-2px;margin-right:10px"><defs><linearGradient id="gc" x1="0" y1="0" x2="0" y2="1"><stop offset="0" stop-color="#79cf5a"/><stop offset="1" stop-color="#3d9a2c"/></linearGradient></defs><rect x="0" y="0" width="18" height="18" rx="3.5" fill="url(#gc)"/><path d="M4 9.5 L7.6 13 L14 4.5" stroke="#fff" stroke-width="2.3" fill="none" stroke-linecap="round" stroke-linejoin="round"/></svg>Pagado</div>
<div style="position:absolute;left:90.5px;top:846.9px;width:74.9px;height:39.6px;background:#ece8fb"></div>
<div style="position:absolute;left:164.4px;top:845.9px;width:2.0px;height:41.6px;background:#d3d3dc"></div>
<div style="position:absolute;left:89.5px;top:885.5px;width:76.9px;height:2.0px;background:#d3d3dc"></div>
<div class="t" style="left:-272.1px;top:856.1px;width:800px;text-align:center;font-size:20.5px;color:#4a2398;font-weight:bold">7</div>
<div style="position:absolute;left:165.4px;top:846.9px;width:556.6px;height:39.6px;background:#fefbe9"></div>
<div style="position:absolute;left:721.0px;top:845.9px;width:2.0px;height:41.6px;background:#d3d3dc"></div>
<div style="position:absolute;left:164.4px;top:885.5px;width:558.6px;height:2.0px;background:#d3d3dc"></div>
<div class="t" style="left:170.4px;top:856.2px;font-size:20.2px;color:#1c1a33;font-weight:bold">Arreglos florales entrada</div>
<div style="position:absolute;left:722.0px;top:846.9px;width:489.3px;height:39.6px;background:#f5f2fc"></div>
<div style="position:absolute;left:1210.3px;top:845.9px;width:2.0px;height:41.6px;background:#d3d3dc"></div>
<div style="position:absolute;left:721.0px;top:885.5px;width:491.3px;height:2.0px;background:#d3d3dc"></div>
<div class="t" style="left:728.0px;top:857.2px;font-size:18.2px;color:#6b6f78;font-style:italic">Flores Las Molas</div>
<div style="position:absolute;left:1211.3px;top:846.9px;width:344.5px;height:39.6px;background:#fefbe9"></div>
<div style="position:absolute;left:1554.8px;top:845.9px;width:2.0px;height:41.6px;background:#d3d3dc"></div>
<div style="position:absolute;left:1210.3px;top:885.5px;width:346.5px;height:2.0px;background:#d3d3dc"></div>
<div class="t" style="left:983.5px;top:856.3px;width:800px;text-align:center;font-size:20px;color:#4a2398">$60,00</div>
<div style="position:absolute;left:1555.8px;top:846.9px;width:332.2px;height:39.6px;background:#fefbe9"></div>
<div style="position:absolute;left:1887.0px;top:845.9px;width:2.0px;height:41.6px;background:#d3d3dc"></div>
<div style="position:absolute;left:1554.8px;top:885.5px;width:334.2px;height:2.0px;background:#d3d3dc"></div>
<div class="t" style="left:1321.9px;top:855.3px;width:800px;text-align:center;font-size:22px;color:#4a2398;font-weight:bold">$60,00</div>
<div style="position:absolute;left:1888.0px;top:846.9px;width:149.8px;height:39.6px;background:#fefbe9"></div>
<div style="position:absolute;left:2036.8px;top:845.9px;width:2.0px;height:41.6px;background:#d3d3dc"></div>
<div style="position:absolute;left:1887.0px;top:885.5px;width:151.8px;height:2.0px;background:#d3d3dc"></div>
<div class="t" style="left:1562.9px;top:856.3px;width:800px;text-align:center;font-size:20px;color:#245c3b;font-weight:bold"></div>
<div style="position:absolute;left:2037.8px;top:846.9px;width:505.7px;height:39.6px;background:#f9e4e4"></div>
<div style="position:absolute;left:2542.5px;top:845.9px;width:2.0px;height:41.6px;background:#d3d3dc"></div>
<div style="position:absolute;left:2036.8px;top:885.5px;width:507.7px;height:2.0px;background:#d3d3dc"></div>
<div class="t" style="left:2042.8px;top:856.2px;font-size:18.2px;color:#9a2525;font-weight:bold"><svg width="18" height="18" viewBox="0 0 18 18" style="vertical-align:-2px;margin-right:10px"><rect x="3" y="0.5" width="12" height="2.2" rx="0.6" fill="#5a3a22"/><rect x="3" y="15.3" width="12" height="2.2" rx="0.6" fill="#5a3a22"/><path d="M4.5 2.7 L13.5 2.7 Q13 7 9.6 9 Q13 11 13.5 15.3 L4.5 15.3 Q5 11 8.4 9 Q5 7 4.5 2.7 Z" fill="#f2f2f2" stroke="#aaa" stroke-width="0.6"/><path d="M6.2 5 L11.8 5 Q11 7.5 9 8.6 Q7 7.5 6.2 5 Z" fill="#d8a25e"/><path d="M5.5 15 Q6.5 12 9 11.5 Q11.5 12 12.5 15 Z" fill="#c58a40"/></svg>Pendiente</div>
<div style="position:absolute;left:90.5px;top:886.5px;width:74.9px;height:39.6px;background:#ece8fb"></div>
<div style="position:absolute;left:164.4px;top:885.5px;width:2.0px;height:41.6px;background:#d3d3dc"></div>
<div style="position:absolute;left:89.5px;top:925.1px;width:76.9px;height:2.0px;background:#d3d3dc"></div>
<div class="t" style="left:-272.1px;top:895.7px;width:800px;text-align:center;font-size:20.5px;color:#4a2398;font-weight:bold">8</div>
<div style="position:absolute;left:165.4px;top:886.5px;width:556.6px;height:39.6px;background:#fefbe9"></div>
<div style="position:absolute;left:721.0px;top:885.5px;width:2.0px;height:41.6px;background:#d3d3dc"></div>
<div style="position:absolute;left:164.4px;top:925.1px;width:558.6px;height:2.0px;background:#d3d3dc"></div>
<div class="t" style="left:170.4px;top:895.8px;font-size:20.2px;color:#1c1a33;font-weight:bold">Fotografía profesional</div>
<div style="position:absolute;left:722.0px;top:886.5px;width:489.3px;height:39.6px;background:#eef5fe"></div>
<div style="position:absolute;left:1210.3px;top:885.5px;width:2.0px;height:41.6px;background:#d3d3dc"></div>
<div style="position:absolute;left:721.0px;top:925.1px;width:491.3px;height:2.0px;background:#d3d3dc"></div>
<div class="t" style="left:728.0px;top:896.8px;font-size:18.2px;color:#6b6f78;font-style:italic">Foto Estudio Panama</div>
<div style="position:absolute;left:1211.3px;top:886.5px;width:344.5px;height:39.6px;background:#fefbe9"></div>
<div style="position:absolute;left:1554.8px;top:885.5px;width:2.0px;height:41.6px;background:#d3d3dc"></div>
<div style="position:absolute;left:1210.3px;top:925.1px;width:346.5px;height:2.0px;background:#d3d3dc"></div>
<div class="t" style="left:983.5px;top:895.9px;width:800px;text-align:center;font-size:20px;color:#4a2398">$200,00</div>
<div style="position:absolute;left:1555.8px;top:886.5px;width:332.2px;height:39.6px;background:#fefbe9"></div>
<div style="position:absolute;left:1887.0px;top:885.5px;width:2.0px;height:41.6px;background:#d3d3dc"></div>
<div style="position:absolute;left:1554.8px;top:925.1px;width:334.2px;height:2.0px;background:#d3d3dc"></div>
<div class="t" style="left:1321.9px;top:894.9px;width:800px;text-align:center;font-size:22px;color:#4a2398;font-weight:bold">$200,00</div>
<div style="position:absolute;left:1888.0px;top:886.5px;width:149.8px;height:39.6px;background:#fefbe9"></div>
<div style="position:absolute;left:2036.8px;top:885.5px;width:2.0px;height:41.6px;background:#d3d3dc"></div>
<div style="position:absolute;left:1887.0px;top:925.1px;width:151.8px;height:2.0px;background:#d3d3dc"></div>
<div class="t" style="left:1562.9px;top:895.9px;width:800px;text-align:center;font-size:20px;color:#245c3b;font-weight:bold">$100,00</div>
<div style="position:absolute;left:2037.8px;top:886.5px;width:505.7px;height:39.6px;background:#fcf2d0"></div>
<div style="position:absolute;left:2542.5px;top:885.5px;width:2.0px;height:41.6px;background:#d3d3dc"></div>
<div style="position:absolute;left:2036.8px;top:925.1px;width:507.7px;height:2.0px;background:#d3d3dc"></div>
<div class="t" style="left:2042.8px;top:895.8px;font-size:18.2px;color:#8c4a17;font-weight:bold"><svg width="18" height="18" viewBox="0 0 18 18" style="vertical-align:-2px;margin-right:10px"><defs><linearGradient id="gs" x1="0" y1="0" x2="0" y2="1"><stop offset="0" stop-color="#9db5d8"/><stop offset="1" stop-color="#5f7fae"/></linearGradient></defs><rect x="0" y="0" width="18" height="18" rx="3.5" fill="url(#gs)"/><path d="M3.6 8.2 A5.2 5.2 0 0 1 13 5.6" stroke="#fff" stroke-width="2" fill="none"/><path d="M14.4 9.8 A5.2 5.2 0 0 1 5 12.4" stroke="#fff" stroke-width="2" fill="none"/><path d="M11.2 3.2 L15.2 5.2 L11.8 8 Z" fill="#fff"/><path d="M6.8 14.8 L2.8 12.8 L6.2 10 Z" fill="#fff"/></svg>Anticipo</div>
<div style="position:absolute;left:90.5px;top:926.1px;width:74.9px;height:39.6px;background:#ece8fb"></div>
<div style="position:absolute;left:164.4px;top:925.1px;width:2.0px;height:41.6px;background:#d3d3dc"></div>
<div style="position:absolute;left:89.5px;top:964.7px;width:76.9px;height:2.0px;background:#d3d3dc"></div>
<div class="t" style="left:-272.1px;top:935.3px;width:800px;text-align:center;font-size:20.5px;color:#4a2398;font-weight:bold">9</div>
<div style="position:absolute;left:165.4px;top:926.1px;width:556.6px;height:39.6px;background:#fefbe9"></div>
<div style="position:absolute;left:721.0px;top:925.1px;width:2.0px;height:41.6px;background:#d3d3dc"></div>
<div style="position:absolute;left:164.4px;top:964.7px;width:558.6px;height:2.0px;background:#d3d3dc"></div>
<div class="t" style="left:170.4px;top:935.5px;font-size:20.2px;color:#1c1a33;font-weight:bold">Video / filmación</div>
<div style="position:absolute;left:722.0px;top:926.1px;width:489.3px;height:39.6px;background:#eef5fe"></div>
<div style="position:absolute;left:1210.3px;top:925.1px;width:2.0px;height:41.6px;background:#d3d3dc"></div>
<div style="position:absolute;left:721.0px;top:964.7px;width:491.3px;height:2.0px;background:#d3d3dc"></div>
<div class="t" style="left:728.0px;top:936.4px;font-size:18.2px;color:#6b6f78;font-style:italic">CineEvent PTY</div>
<div style="position:absolute;left:1211.3px;top:926.1px;width:344.5px;height:39.6px;background:#fefbe9"></div>
<div style="position:absolute;left:1554.8px;top:925.1px;width:2.0px;height:41.6px;background:#d3d3dc"></div>
<div style="position:absolute;left:1210.3px;top:964.7px;width:346.5px;height:2.0px;background:#d3d3dc"></div>
<div class="t" style="left:983.5px;top:935.6px;width:800px;text-align:center;font-size:20px;color:#4a2398">$150,00</div>
<div style="position:absolute;left:1555.8px;top:926.1px;width:332.2px;height:39.6px;background:#fefbe9"></div>
<div style="position:absolute;left:1887.0px;top:925.1px;width:2.0px;height:41.6px;background:#d3d3dc"></div>
<div style="position:absolute;left:1554.8px;top:964.7px;width:334.2px;height:2.0px;background:#d3d3dc"></div>
<div class="t" style="left:1321.9px;top:934.6px;width:800px;text-align:center;font-size:22px;color:#4a2398;font-weight:bold">$150,00</div>
<div style="position:absolute;left:1888.0px;top:926.1px;width:149.8px;height:39.6px;background:#fefbe9"></div>
<div style="position:absolute;left:2036.8px;top:925.1px;width:2.0px;height:41.6px;background:#d3d3dc"></div>
<div style="position:absolute;left:1887.0px;top:964.7px;width:151.8px;height:2.0px;background:#d3d3dc"></div>
<div class="t" style="left:1562.9px;top:935.6px;width:800px;text-align:center;font-size:20px;color:#245c3b;font-weight:bold">$75,00</div>
<div style="position:absolute;left:2037.8px;top:926.1px;width:505.7px;height:39.6px;background:#fcf2d0"></div>
<div style="position:absolute;left:2542.5px;top:925.1px;width:2.0px;height:41.6px;background:#d3d3dc"></div>
<div style="position:absolute;left:2036.8px;top:964.7px;width:507.7px;height:2.0px;background:#d3d3dc"></div>
<div class="t" style="left:2042.8px;top:935.4px;font-size:18.2px;color:#8c4a17;font-weight:bold"><svg width="18" height="18" viewBox="0 0 18 18" style="vertical-align:-2px;margin-right:10px"><defs><linearGradient id="gs" x1="0" y1="0" x2="0" y2="1"><stop offset="0" stop-color="#9db5d8"/><stop offset="1" stop-color="#5f7fae"/></linearGradient></defs><rect x="0" y="0" width="18" height="18" rx="3.5" fill="url(#gs)"/><path d="M3.6 8.2 A5.2 5.2 0 0 1 13 5.6" stroke="#fff" stroke-width="2" fill="none"/><path d="M14.4 9.8 A5.2 5.2 0 0 1 5 12.4" stroke="#fff" stroke-width="2" fill="none"/><path d="M11.2 3.2 L15.2 5.2 L11.8 8 Z" fill="#fff"/><path d="M6.8 14.8 L2.8 12.8 L6.2 10 Z" fill="#fff"/></svg>Anticipo</div>
<div style="position:absolute;left:90.5px;top:965.7px;width:74.9px;height:39.6px;background:#ece8fb"></div>
<div style="position:absolute;left:164.4px;top:964.7px;width:2.0px;height:41.6px;background:#d3d3dc"></div>
<div style="position:absolute;left:89.5px;top:1004.4px;width:76.9px;height:2.0px;background:#d3d3dc"></div>
<div class="t" style="left:-272.1px;top:974.9px;width:800px;text-align:center;font-size:20.5px;color:#4a2398;font-weight:bold">10</div>
<div style="position:absolute;left:165.4px;top:965.7px;width:556.6px;height:39.6px;background:#fefbe9"></div>
<div style="position:absolute;left:721.0px;top:964.7px;width:2.0px;height:41.6px;background:#d3d3dc"></div>
<div style="position:absolute;left:164.4px;top:1004.4px;width:558.6px;height:2.0px;background:#d3d3dc"></div>
<div class="t" style="left:170.4px;top:975.1px;font-size:20.2px;color:#1c1a33;font-weight:bold">Photobooth / selfie station</div>
<div style="position:absolute;left:722.0px;top:965.7px;width:489.3px;height:39.6px;background:#eef5fe"></div>
<div style="position:absolute;left:1210.3px;top:964.7px;width:2.0px;height:41.6px;background:#d3d3dc"></div>
<div style="position:absolute;left:721.0px;top:1004.4px;width:491.3px;height:2.0px;background:#d3d3dc"></div>
<div class="t" style="left:728.0px;top:976.1px;font-size:18.2px;color:#6b6f78;font-style:italic">Funphoto PTY</div>
<div style="position:absolute;left:1211.3px;top:965.7px;width:344.5px;height:39.6px;background:#fefbe9"></div>
<div style="position:absolute;left:1554.8px;top:964.7px;width:2.0px;height:41.6px;background:#d3d3dc"></div>
<div style="position:absolute;left:1210.3px;top:1004.4px;width:346.5px;height:2.0px;background:#d3d3dc"></div>
<div class="t" style="left:983.5px;top:975.2px;width:800px;text-align:center;font-size:20px;color:#4a2398">$80,00</div>
<div style="position:absolute;left:1555.8px;top:965.7px;width:332.2px;height:39.6px;background:#fefbe9"></div>
<div style="position:absolute;left:1887.0px;top:964.7px;width:2.0px;height:41.6px;background:#d3d3dc"></div>
<div style="position:absolute;left:1554.8px;top:1004.4px;width:334.2px;height:2.0px;background:#d3d3dc"></div>
<div class="t" style="left:1321.9px;top:974.2px;width:800px;text-align:center;font-size:22px;color:#4a2398;font-weight:bold">$80,00</div>
<div style="position:absolute;left:1888.0px;top:965.7px;width:149.8px;height:39.6px;background:#fefbe9"></div>
<div style="position:absolute;left:2036.8px;top:964.7px;width:2.0px;height:41.6px;background:#d3d3dc"></div>
<div style="position:absolute;left:1887.0px;top:1004.4px;width:151.8px;height:2.0px;background:#d3d3dc"></div>
<div class="t" style="left:1562.9px;top:975.2px;width:800px;text-align:center;font-size:20px;color:#245c3b;font-weight:bold"></div>
<div style="position:absolute;left:2037.8px;top:965.7px;width:505.7px;height:39.6px;background:#f9e4e4"></div>
<div style="position:absolute;left:2542.5px;top:964.7px;width:2.0px;height:41.6px;background:#d3d3dc"></div>
<div style="position:absolute;left:2036.8px;top:1004.4px;width:507.7px;height:2.0px;background:#d3d3dc"></div>
<div class="t" style="left:2042.8px;top:975.1px;font-size:18.2px;color:#9a2525;font-weight:bold"><svg width="18" height="18" viewBox="0 0 18 18" style="vertical-align:-2px;margin-right:10px"><rect x="3" y="0.5" width="12" height="2.2" rx="0.6" fill="#5a3a22"/><rect x="3" y="15.3" width="12" height="2.2" rx="0.6" fill="#5a3a22"/><path d="M4.5 2.7 L13.5 2.7 Q13 7 9.6 9 Q13 11 13.5 15.3 L4.5 15.3 Q5 11 8.4 9 Q5 7 4.5 2.7 Z" fill="#f2f2f2" stroke="#aaa" stroke-width="0.6"/><path d="M6.2 5 L11.8 5 Q11 7.5 9 8.6 Q7 7.5 6.2 5 Z" fill="#d8a25e"/><path d="M5.5 15 Q6.5 12 9 11.5 Q11.5 12 12.5 15 Z" fill="#c58a40"/></svg>Pendiente</div>
<div style="position:absolute;left:90.5px;top:1005.4px;width:74.9px;height:39.6px;background:#ece8fb"></div>
<div style="position:absolute;left:164.4px;top:1004.4px;width:2.0px;height:41.6px;background:#d3d3dc"></div>
<div style="position:absolute;left:89.5px;top:1044.0px;width:76.9px;height:2.0px;background:#d3d3dc"></div>
<div class="t" style="left:-272.1px;top:1014.6px;width:800px;text-align:center;font-size:20.5px;color:#4a2398;font-weight:bold">11</div>
<div style="position:absolute;left:165.4px;top:1005.4px;width:556.6px;height:39.6px;background:#fefbe9"></div>
<div style="position:absolute;left:721.0px;top:1004.4px;width:2.0px;height:41.6px;background:#d3d3dc"></div>
<div style="position:absolute;left:164.4px;top:1044.0px;width:558.6px;height:2.0px;background:#d3d3dc"></div>
<div class="t" style="left:170.4px;top:1014.7px;font-size:20.2px;color:#1c1a33;font-weight:bold">Vestido de quinceañera</div>
<div style="position:absolute;left:722.0px;top:1005.4px;width:489.3px;height:39.6px;background:#fdf8cc"></div>
<div style="position:absolute;left:1210.3px;top:1004.4px;width:2.0px;height:41.6px;background:#d3d3dc"></div>
<div style="position:absolute;left:721.0px;top:1044.0px;width:491.3px;height:2.0px;background:#d3d3dc"></div>
<div class="t" style="left:728.0px;top:1015.7px;font-size:18.2px;color:#6b6f78;font-style:italic">Boutique Elegance</div>
<div style="position:absolute;left:1211.3px;top:1005.4px;width:344.5px;height:39.6px;background:#fefbe9"></div>
<div style="position:absolute;left:1554.8px;top:1004.4px;width:2.0px;height:41.6px;background:#d3d3dc"></div>
<div style="position:absolute;left:1210.3px;top:1044.0px;width:346.5px;height:2.0px;background:#d3d3dc"></div>
<div class="t" style="left:983.5px;top:1014.8px;width:800px;text-align:center;font-size:20px;color:#4a2398">$250,00</div>
<div style="position:absolute;left:1555.8px;top:1005.4px;width:332.2px;height:39.6px;background:#fefbe9"></div>
<div style="position:absolute;left:1887.0px;top:1004.4px;width:2.0px;height:41.6px;background:#d3d3dc"></div>
<div style="position:absolute;left:1554.8px;top:1044.0px;width:334.2px;height:2.0px;background:#d3d3dc"></div>
<div class="t" style="left:1321.9px;top:1013.8px;width:800px;text-align:center;font-size:22px;color:#4a2398;font-weight:bold">$250,00</div>
<div style="position:absolute;left:1888.0px;top:1005.4px;width:149.8px;height:39.6px;background:#fefbe9"></div>
<div style="position:absolute;left:2036.8px;top:1004.4px;width:2.0px;height:41.6px;background:#d3d3dc"></div>
<div style="position:absolute;left:1887.0px;top:1044.0px;width:151.8px;height:2.0px;background:#d3d3dc"></div>
<div class="t" style="left:1562.9px;top:1014.8px;width:800px;text-align:center;font-size:20px;color:#245c3b;font-weight:bold">$250,00</div>
<div style="position:absolute;left:2037.8px;top:1005.4px;width:505.7px;height:39.6px;background:#edfbf4"></div>
<div style="position:absolute;left:2542.5px;top:1004.4px;width:2.0px;height:41.6px;background:#d3d3dc"></div>
<div style="position:absolute;left:2036.8px;top:1044.0px;width:507.7px;height:2.0px;background:#d3d3dc"></div>
<div class="t" style="left:2042.8px;top:1014.7px;font-size:18.2px;color:#245c3b;font-weight:bold"><svg width="18" height="18" viewBox="0 0 18 18" style="vertical-align:-2px;margin-right:10px"><defs><linearGradient id="gc" x1="0" y1="0" x2="0" y2="1"><stop offset="0" stop-color="#79cf5a"/><stop offset="1" stop-color="#3d9a2c"/></linearGradient></defs><rect x="0" y="0" width="18" height="18" rx="3.5" fill="url(#gc)"/><path d="M4 9.5 L7.6 13 L14 4.5" stroke="#fff" stroke-width="2.3" fill="none" stroke-linecap="round" stroke-linejoin="round"/></svg>Pagado</div>
<div style="position:absolute;left:90.5px;top:1045.0px;width:74.9px;height:39.6px;background:#ece8fb"></div>
<div style="position:absolute;left:164.4px;top:1044.0px;width:2.0px;height:41.6px;background:#d3d3dc"></div>
<div style="position:absolute;left:89.5px;top:1083.6px;width:76.9px;height:2.0px;background:#d3d3dc"></div>
<div class="t" style="left:-272.1px;top:1054.2px;width:800px;text-align:center;font-size:20.5px;color:#4a2398;font-weight:bold">12</div>
<div style="position:absolute;left:165.4px;top:1045.0px;width:556.6px;height:39.6px;background:#fefbe9"></div>
<div style="position:absolute;left:721.0px;top:1044.0px;width:2.0px;height:41.6px;background:#d3d3dc"></div>
<div style="position:absolute;left:164.4px;top:1083.6px;width:558.6px;height:2.0px;background:#d3d3dc"></div>
<div class="t" style="left:170.4px;top:1054.3px;font-size:20.2px;color:#1c1a33;font-weight:bold">Zapatos y accesorios</div>
<div style="position:absolute;left:722.0px;top:1045.0px;width:489.3px;height:39.6px;background:#fdf8cc"></div>
<div style="position:absolute;left:1210.3px;top:1044.0px;width:2.0px;height:41.6px;background:#d3d3dc"></div>
<div style="position:absolute;left:721.0px;top:1083.6px;width:491.3px;height:2.0px;background:#d3d3dc"></div>
<div class="t" style="left:728.0px;top:1055.3px;font-size:18.2px;color:#6b6f78;font-style:italic">Centro Comercial</div>
<div style="position:absolute;left:1211.3px;top:1045.0px;width:344.5px;height:39.6px;background:#fefbe9"></div>
<div style="position:absolute;left:1554.8px;top:1044.0px;width:2.0px;height:41.6px;background:#d3d3dc"></div>
<div style="position:absolute;left:1210.3px;top:1083.6px;width:346.5px;height:2.0px;background:#d3d3dc"></div>
<div class="t" style="left:983.5px;top:1054.4px;width:800px;text-align:center;font-size:20px;color:#4a2398">$60,00</div>
<div style="position:absolute;left:1555.8px;top:1045.0px;width:332.2px;height:39.6px;background:#fefbe9"></div>
<div style="position:absolute;left:1887.0px;top:1044.0px;width:2.0px;height:41.6px;background:#d3d3dc"></div>
<div style="position:absolute;left:1554.8px;top:1083.6px;width:334.2px;height:2.0px;background:#d3d3dc"></div>
<div class="t" style="left:1321.9px;top:1053.5px;width:800px;text-align:center;font-size:22px;color:#4a2398;font-weight:bold">$60,00</div>
<div style="position:absolute;left:1888.0px;top:1045.0px;width:149.8px;height:39.6px;background:#fefbe9"></div>
<div style="position:absolute;left:2036.8px;top:1044.0px;width:2.0px;height:41.6px;background:#d3d3dc"></div>
<div style="position:absolute;left:1887.0px;top:1083.6px;width:151.8px;height:2.0px;background:#d3d3dc"></div>
<div class="t" style="left:1562.9px;top:1054.4px;width:800px;text-align:center;font-size:20px;color:#245c3b;font-weight:bold">$60,00</div>
<div style="position:absolute;left:2037.8px;top:1045.0px;width:505.7px;height:39.6px;background:#edfbf4"></div>
<div style="position:absolute;left:2542.5px;top:1044.0px;width:2.0px;height:41.6px;background:#d3d3dc"></div>
<div style="position:absolute;left:2036.8px;top:1083.6px;width:507.7px;height:2.0px;background:#d3d3dc"></div>
<div class="t" style="left:2042.8px;top:1054.3px;font-size:18.2px;color:#245c3b;font-weight:bold"><svg width="18" height="18" viewBox="0 0 18 18" style="vertical-align:-2px;margin-right:10px"><defs><linearGradient id="gc" x1="0" y1="0" x2="0" y2="1"><stop offset="0" stop-color="#79cf5a"/><stop offset="1" stop-color="#3d9a2c"/></linearGradient></defs><rect x="0" y="0" width="18" height="18" rx="3.5" fill="url(#gc)"/><path d="M4 9.5 L7.6 13 L14 4.5" stroke="#fff" stroke-width="2.3" fill="none" stroke-linecap="round" stroke-linejoin="round"/></svg>Pagado</div>
<div style="position:absolute;left:90.5px;top:1084.6px;width:74.9px;height:39.6px;background:#ece8fb"></div>
<div style="position:absolute;left:164.4px;top:1083.6px;width:2.0px;height:41.6px;background:#d3d3dc"></div>
<div style="position:absolute;left:89.5px;top:1123.3px;width:76.9px;height:2.0px;background:#d3d3dc"></div>
<div class="t" style="left:-272.1px;top:1093.8px;width:800px;text-align:center;font-size:20.5px;color:#4a2398;font-weight:bold">13</div>
<div style="position:absolute;left:165.4px;top:1084.6px;width:556.6px;height:39.6px;background:#fefbe9"></div>
<div style="position:absolute;left:721.0px;top:1083.6px;width:2.0px;height:41.6px;background:#d3d3dc"></div>
<div style="position:absolute;left:164.4px;top:1123.3px;width:558.6px;height:2.0px;background:#d3d3dc"></div>
<div class="t" style="left:170.4px;top:1094.0px;font-size:20.2px;color:#1c1a33;font-weight:bold">Cabello y maquillaje</div>
<div style="position:absolute;left:722.0px;top:1084.6px;width:489.3px;height:39.6px;background:#fdf8cc"></div>
<div style="position:absolute;left:1210.3px;top:1083.6px;width:2.0px;height:41.6px;background:#d3d3dc"></div>
<div style="position:absolute;left:721.0px;top:1123.3px;width:491.3px;height:2.0px;background:#d3d3dc"></div>
<div class="t" style="left:728.0px;top:1095.0px;font-size:18.2px;color:#6b6f78;font-style:italic">Salon Beauty</div>
<div style="position:absolute;left:1211.3px;top:1084.6px;width:344.5px;height:39.6px;background:#fefbe9"></div>
<div style="position:absolute;left:1554.8px;top:1083.6px;width:2.0px;height:41.6px;background:#d3d3dc"></div>
<div style="position:absolute;left:1210.3px;top:1123.3px;width:346.5px;height:2.0px;background:#d3d3dc"></div>
<div class="t" style="left:983.5px;top:1094.1px;width:800px;text-align:center;font-size:20px;color:#4a2398">$80,00</div>
<div style="position:absolute;left:1555.8px;top:1084.6px;width:332.2px;height:39.6px;background:#fefbe9"></div>
<div style="position:absolute;left:1887.0px;top:1083.6px;width:2.0px;height:41.6px;background:#d3d3dc"></div>
<div style="position:absolute;left:1554.8px;top:1123.3px;width:334.2px;height:2.0px;background:#d3d3dc"></div>
<div class="t" style="left:1321.9px;top:1093.1px;width:800px;text-align:center;font-size:22px;color:#4a2398;font-weight:bold">$80,00</div>
<div style="position:absolute;left:1888.0px;top:1084.6px;width:149.8px;height:39.6px;background:#fefbe9"></div>
<div style="position:absolute;left:2036.8px;top:1083.6px;width:2.0px;height:41.6px;background:#d3d3dc"></div>
<div style="position:absolute;left:1887.0px;top:1123.3px;width:151.8px;height:2.0px;background:#d3d3dc"></div>
<div class="t" style="left:1562.9px;top:1094.1px;width:800px;text-align:center;font-size:20px;color:#245c3b;font-weight:bold"></div>
<div style="position:absolute;left:2037.8px;top:1084.6px;width:505.7px;height:39.6px;background:#f9e4e4"></div>
<div style="position:absolute;left:2542.5px;top:1083.6px;width:2.0px;height:41.6px;background:#d3d3dc"></div>
<div style="position:absolute;left:2036.8px;top:1123.3px;width:507.7px;height:2.0px;background:#d3d3dc"></div>
<div class="t" style="left:2042.8px;top:1094.0px;font-size:18.2px;color:#9a2525;font-weight:bold"><svg width="18" height="18" viewBox="0 0 18 18" style="vertical-align:-2px;margin-right:10px"><rect x="3" y="0.5" width="12" height="2.2" rx="0.6" fill="#5a3a22"/><rect x="3" y="15.3" width="12" height="2.2" rx="0.6" fill="#5a3a22"/><path d="M4.5 2.7 L13.5 2.7 Q13 7 9.6 9 Q13 11 13.5 15.3 L4.5 15.3 Q5 11 8.4 9 Q5 7 4.5 2.7 Z" fill="#f2f2f2" stroke="#aaa" stroke-width="0.6"/><path d="M6.2 5 L11.8 5 Q11 7.5 9 8.6 Q7 7.5 6.2 5 Z" fill="#d8a25e"/><path d="M5.5 15 Q6.5 12 9 11.5 Q11.5 12 12.5 15 Z" fill="#c58a40"/></svg>Pagar día anterior</div>
<div style="position:absolute;left:90.5px;top:1124.3px;width:74.9px;height:39.6px;background:#ece8fb"></div>
<div style="position:absolute;left:164.4px;top:1123.3px;width:2.0px;height:41.6px;background:#d3d3dc"></div>
<div style="position:absolute;left:89.5px;top:1162.9px;width:76.9px;height:2.0px;background:#d3d3dc"></div>
<div class="t" style="left:-272.1px;top:1133.5px;width:800px;text-align:center;font-size:20.5px;color:#4a2398;font-weight:bold">14</div>
<div style="position:absolute;left:165.4px;top:1124.3px;width:556.6px;height:39.6px;background:#fefbe9"></div>
<div style="position:absolute;left:721.0px;top:1123.3px;width:2.0px;height:41.6px;background:#d3d3dc"></div>
<div style="position:absolute;left:164.4px;top:1162.9px;width:558.6px;height:2.0px;background:#d3d3dc"></div>
<div class="t" style="left:170.4px;top:1133.6px;font-size:20.2px;color:#1c1a33;font-weight:bold">DJ o música en vivo</div>
<div style="position:absolute;left:722.0px;top:1124.3px;width:489.3px;height:39.6px;background:#fcf0d2"></div>
<div style="position:absolute;left:1210.3px;top:1123.3px;width:2.0px;height:41.6px;background:#d3d3dc"></div>
<div style="position:absolute;left:721.0px;top:1162.9px;width:491.3px;height:2.0px;background:#d3d3dc"></div>
<div class="t" style="left:728.0px;top:1134.6px;font-size:18.2px;color:#6b6f78;font-style:italic">DJ Panamá Events</div>
<div style="position:absolute;left:1211.3px;top:1124.3px;width:344.5px;height:39.6px;background:#fefbe9"></div>
<div style="position:absolute;left:1554.8px;top:1123.3px;width:2.0px;height:41.6px;background:#d3d3dc"></div>
<div style="position:absolute;left:1210.3px;top:1162.9px;width:346.5px;height:2.0px;background:#d3d3dc"></div>
<div class="t" style="left:983.5px;top:1133.7px;width:800px;text-align:center;font-size:20px;color:#4a2398">$200,00</div>
<div style="position:absolute;left:1555.8px;top:1124.3px;width:332.2px;height:39.6px;background:#fefbe9"></div>
<div style="position:absolute;left:1887.0px;top:1123.3px;width:2.0px;height:41.6px;background:#d3d3dc"></div>
<div style="position:absolute;left:1554.8px;top:1162.9px;width:334.2px;height:2.0px;background:#d3d3dc"></div>
<div class="t" style="left:1321.9px;top:1132.7px;width:800px;text-align:center;font-size:22px;color:#4a2398;font-weight:bold">$200,00</div>
<div style="position:absolute;left:1888.0px;top:1124.3px;width:149.8px;height:39.6px;background:#fefbe9"></div>
<div style="position:absolute;left:2036.8px;top:1123.3px;width:2.0px;height:41.6px;background:#d3d3dc"></div>
<div style="position:absolute;left:1887.0px;top:1162.9px;width:151.8px;height:2.0px;background:#d3d3dc"></div>
<div class="t" style="left:1562.9px;top:1133.7px;width:800px;text-align:center;font-size:20px;color:#245c3b;font-weight:bold">$100,00</div>
<div style="position:absolute;left:2037.8px;top:1124.3px;width:505.7px;height:39.6px;background:#fcf2d0"></div>
<div style="position:absolute;left:2542.5px;top:1123.3px;width:2.0px;height:41.6px;background:#d3d3dc"></div>
<div style="position:absolute;left:2036.8px;top:1162.9px;width:507.7px;height:2.0px;background:#d3d3dc"></div>
<div class="t" style="left:2042.8px;top:1133.6px;font-size:18.2px;color:#8c4a17;font-weight:bold"><svg width="18" height="18" viewBox="0 0 18 18" style="vertical-align:-2px;margin-right:10px"><defs><linearGradient id="gs" x1="0" y1="0" x2="0" y2="1"><stop offset="0" stop-color="#9db5d8"/><stop offset="1" stop-color="#5f7fae"/></linearGradient></defs><rect x="0" y="0" width="18" height="18" rx="3.5" fill="url(#gs)"/><path d="M3.6 8.2 A5.2 5.2 0 0 1 13 5.6" stroke="#fff" stroke-width="2" fill="none"/><path d="M14.4 9.8 A5.2 5.2 0 0 1 5 12.4" stroke="#fff" stroke-width="2" fill="none"/><path d="M11.2 3.2 L15.2 5.2 L11.8 8 Z" fill="#fff"/><path d="M6.8 14.8 L2.8 12.8 L6.2 10 Z" fill="#fff"/></svg>Anticipo</div>
<div style="position:absolute;left:90.5px;top:1163.9px;width:74.9px;height:39.6px;background:#ece8fb"></div>
<div style="position:absolute;left:164.4px;top:1162.9px;width:2.0px;height:41.6px;background:#d3d3dc"></div>
<div style="position:absolute;left:89.5px;top:1202.5px;width:76.9px;height:2.0px;background:#d3d3dc"></div>
<div class="t" style="left:-272.1px;top:1173.1px;width:800px;text-align:center;font-size:20.5px;color:#4a2398;font-weight:bold">15</div>
<div style="position:absolute;left:165.4px;top:1163.9px;width:556.6px;height:39.6px;background:#fefbe9"></div>
<div style="position:absolute;left:721.0px;top:1162.9px;width:2.0px;height:41.6px;background:#d3d3dc"></div>
<div style="position:absolute;left:164.4px;top:1202.5px;width:558.6px;height:2.0px;background:#d3d3dc"></div>
<div class="t" style="left:170.4px;top:1173.2px;font-size:20.2px;color:#1c1a33;font-weight:bold">Sorpresa / show especial</div>
<div style="position:absolute;left:722.0px;top:1163.9px;width:489.3px;height:39.6px;background:#fcf0d2"></div>
<div style="position:absolute;left:1210.3px;top:1162.9px;width:2.0px;height:41.6px;background:#d3d3dc"></div>
<div style="position:absolute;left:721.0px;top:1202.5px;width:491.3px;height:2.0px;background:#d3d3dc"></div>
<div class="t" style="left:728.0px;top:1174.2px;font-size:18.2px;color:#6b6f78;font-style:italic">Por definir</div>
<div style="position:absolute;left:1211.3px;top:1163.9px;width:344.5px;height:39.6px;background:#fefbe9"></div>
<div style="position:absolute;left:1554.8px;top:1162.9px;width:2.0px;height:41.6px;background:#d3d3dc"></div>
<div style="position:absolute;left:1210.3px;top:1202.5px;width:346.5px;height:2.0px;background:#d3d3dc"></div>
<div class="t" style="left:983.5px;top:1173.3px;width:800px;text-align:center;font-size:20px;color:#4a2398">$50,00</div>
<div style="position:absolute;left:1555.8px;top:1163.9px;width:332.2px;height:39.6px;background:#fefbe9"></div>
<div style="position:absolute;left:1887.0px;top:1162.9px;width:2.0px;height:41.6px;background:#d3d3dc"></div>
<div style="position:absolute;left:1554.8px;top:1202.5px;width:334.2px;height:2.0px;background:#d3d3dc"></div>
<div class="t" style="left:1321.9px;top:1172.4px;width:800px;text-align:center;font-size:22px;color:#4a2398;font-weight:bold">$50,00</div>
<div style="position:absolute;left:1888.0px;top:1163.9px;width:149.8px;height:39.6px;background:#fefbe9"></div>
<div style="position:absolute;left:2036.8px;top:1162.9px;width:2.0px;height:41.6px;background:#d3d3dc"></div>
<div style="position:absolute;left:1887.0px;top:1202.5px;width:151.8px;height:2.0px;background:#d3d3dc"></div>
<div class="t" style="left:1562.9px;top:1173.3px;width:800px;text-align:center;font-size:20px;color:#245c3b;font-weight:bold"></div>
<div style="position:absolute;left:2037.8px;top:1163.9px;width:505.7px;height:39.6px;background:#f9e4e4"></div>
<div style="position:absolute;left:2542.5px;top:1162.9px;width:2.0px;height:41.6px;background:#d3d3dc"></div>
<div style="position:absolute;left:2036.8px;top:1202.5px;width:507.7px;height:2.0px;background:#d3d3dc"></div>
<div class="t" style="left:2042.8px;top:1173.2px;font-size:18.2px;color:#9a2525;font-weight:bold"><svg width="18" height="18" viewBox="0 0 18 18" style="vertical-align:-2px;margin-right:10px"><rect x="3" y="0.5" width="12" height="2.2" rx="0.6" fill="#5a3a22"/><rect x="3" y="15.3" width="12" height="2.2" rx="0.6" fill="#5a3a22"/><path d="M4.5 2.7 L13.5 2.7 Q13 7 9.6 9 Q13 11 13.5 15.3 L4.5 15.3 Q5 11 8.4 9 Q5 7 4.5 2.7 Z" fill="#f2f2f2" stroke="#aaa" stroke-width="0.6"/><path d="M6.2 5 L11.8 5 Q11 7.5 9 8.6 Q7 7.5 6.2 5 Z" fill="#d8a25e"/><path d="M5.5 15 Q6.5 12 9 11.5 Q11.5 12 12.5 15 Z" fill="#c58a40"/></svg>Pendiente</div>
<div style="position:absolute;left:90.5px;top:1203.5px;width:74.9px;height:39.6px;background:#ece8fb"></div>
<div style="position:absolute;left:164.4px;top:1202.5px;width:2.0px;height:41.6px;background:#d3d3dc"></div>
<div style="position:absolute;left:89.5px;top:1242.2px;width:76.9px;height:2.0px;background:#d3d3dc"></div>
<div class="t" style="left:-272.1px;top:1212.7px;width:800px;text-align:center;font-size:20.5px;color:#4a2398;font-weight:bold">16</div>
<div style="position:absolute;left:165.4px;top:1203.5px;width:556.6px;height:39.6px;background:#fefbe9"></div>
<div style="position:absolute;left:721.0px;top:1202.5px;width:2.0px;height:41.6px;background:#d3d3dc"></div>
<div style="position:absolute;left:164.4px;top:1242.2px;width:558.6px;height:2.0px;background:#d3d3dc"></div>
<div class="t" style="left:170.4px;top:1212.9px;font-size:20.2px;color:#1c1a33;font-weight:bold">Invitaciones impresas</div>
<div style="position:absolute;left:722.0px;top:1203.5px;width:489.3px;height:39.6px;background:#eefcf5"></div>
<div style="position:absolute;left:1210.3px;top:1202.5px;width:2.0px;height:41.6px;background:#d3d3dc"></div>
<div style="position:absolute;left:721.0px;top:1242.2px;width:491.3px;height:2.0px;background:#d3d3dc"></div>
<div class="t" style="left:728.0px;top:1213.8px;font-size:18.2px;color:#6b6f78;font-style:italic">Print &amp; Design PTY</div>
<div style="position:absolute;left:1211.3px;top:1203.5px;width:344.5px;height:39.6px;background:#fefbe9"></div>
<div style="position:absolute;left:1554.8px;top:1202.5px;width:2.0px;height:41.6px;background:#d3d3dc"></div>
<div style="position:absolute;left:1210.3px;top:1242.2px;width:346.5px;height:2.0px;background:#d3d3dc"></div>
<div class="t" style="left:983.5px;top:1213.0px;width:800px;text-align:center;font-size:20px;color:#4a2398">$40,00</div>
<div style="position:absolute;left:1555.8px;top:1203.5px;width:332.2px;height:39.6px;background:#fefbe9"></div>
<div style="position:absolute;left:1887.0px;top:1202.5px;width:2.0px;height:41.6px;background:#d3d3dc"></div>
<div style="position:absolute;left:1554.8px;top:1242.2px;width:334.2px;height:2.0px;background:#d3d3dc"></div>
<div class="t" style="left:1321.9px;top:1212.0px;width:800px;text-align:center;font-size:22px;color:#4a2398;font-weight:bold">$40,00</div>
<div style="position:absolute;left:1888.0px;top:1203.5px;width:149.8px;height:39.6px;background:#fefbe9"></div>
<div style="position:absolute;left:2036.8px;top:1202.5px;width:2.0px;height:41.6px;background:#d3d3dc"></div>
<div style="position:absolute;left:1887.0px;top:1242.2px;width:151.8px;height:2.0px;background:#d3d3dc"></div>
<div class="t" style="left:1562.9px;top:1213.0px;width:800px;text-align:center;font-size:20px;color:#245c3b;font-weight:bold">$40,00</div>
<div style="position:absolute;left:2037.8px;top:1203.5px;width:505.7px;height:39.6px;background:#edfbf4"></div>
<div style="position:absolute;left:2542.5px;top:1202.5px;width:2.0px;height:41.6px;background:#d3d3dc"></div>
<div style="position:absolute;left:2036.8px;top:1242.2px;width:507.7px;height:2.0px;background:#d3d3dc"></div>
<div class="t" style="left:2042.8px;top:1212.8px;font-size:18.2px;color:#245c3b;font-weight:bold"><svg width="18" height="18" viewBox="0 0 18 18" style="vertical-align:-2px;margin-right:10px"><defs><linearGradient id="gc" x1="0" y1="0" x2="0" y2="1"><stop offset="0" stop-color="#79cf5a"/><stop offset="1" stop-color="#3d9a2c"/></linearGradient></defs><rect x="0" y="0" width="18" height="18" rx="3.5" fill="url(#gc)"/><path d="M4 9.5 L7.6 13 L14 4.5" stroke="#fff" stroke-width="2.3" fill="none" stroke-linecap="round" stroke-linejoin="round"/></svg>Pagado</div>
<div style="position:absolute;left:90.5px;top:1243.2px;width:74.9px;height:39.6px;background:#ece8fb"></div>
<div style="position:absolute;left:164.4px;top:1242.2px;width:2.0px;height:41.6px;background:#d3d3dc"></div>
<div style="position:absolute;left:89.5px;top:1281.8px;width:76.9px;height:2.0px;background:#d3d3dc"></div>
<div class="t" style="left:-272.1px;top:1252.4px;width:800px;text-align:center;font-size:20.5px;color:#4a2398;font-weight:bold">17</div>
<div style="position:absolute;left:165.4px;top:1243.2px;width:556.6px;height:39.6px;background:#fefbe9"></div>
<div style="position:absolute;left:721.0px;top:1242.2px;width:2.0px;height:41.6px;background:#d3d3dc"></div>
<div style="position:absolute;left:164.4px;top:1281.8px;width:558.6px;height:2.0px;background:#d3d3dc"></div>
<div class="t" style="left:170.4px;top:1252.5px;font-size:20.2px;color:#1c1a33;font-weight:bold">Recuerdos para invitados</div>
<div style="position:absolute;left:722.0px;top:1243.2px;width:489.3px;height:39.6px;background:#eefcf5"></div>
<div style="position:absolute;left:1210.3px;top:1242.2px;width:2.0px;height:41.6px;background:#d3d3dc"></div>
<div style="position:absolute;left:721.0px;top:1281.8px;width:491.3px;height:2.0px;background:#d3d3dc"></div>
<div class="t" style="left:728.0px;top:1253.5px;font-size:18.2px;color:#6b6f78;font-style:italic">Artesanías personalizadas</div>
<div style="position:absolute;left:1211.3px;top:1243.2px;width:344.5px;height:39.6px;background:#fefbe9"></div>
<div style="position:absolute;left:1554.8px;top:1242.2px;width:2.0px;height:41.6px;background:#d3d3dc"></div>
<div style="position:absolute;left:1210.3px;top:1281.8px;width:346.5px;height:2.0px;background:#d3d3dc"></div>
<div class="t" style="left:983.5px;top:1252.6px;width:800px;text-align:center;font-size:20px;color:#4a2398">$60,00</div>
<div style="position:absolute;left:1555.8px;top:1243.2px;width:332.2px;height:39.6px;background:#fefbe9"></div>
<div style="position:absolute;left:1887.0px;top:1242.2px;width:2.0px;height:41.6px;background:#d3d3dc"></div>
<div style="position:absolute;left:1554.8px;top:1281.8px;width:334.2px;height:2.0px;background:#d3d3dc"></div>
<div class="t" style="left:1321.9px;top:1251.6px;width:800px;text-align:center;font-size:22px;color:#4a2398;font-weight:bold">$60,00</div>
<div style="position:absolute;left:1888.0px;top:1243.2px;width:149.8px;height:39.6px;background:#fefbe9"></div>
<div style="position:absolute;left:2036.8px;top:1242.2px;width:2.0px;height:41.6px;background:#d3d3dc"></div>
<div style="position:absolute;left:1887.0px;top:1281.8px;width:151.8px;height:2.0px;background:#d3d3dc"></div>
<div class="t" style="left:1562.9px;top:1252.6px;width:800px;text-align:center;font-size:20px;color:#245c3b;font-weight:bold"></div>
<div style="position:absolute;left:2037.8px;top:1243.2px;width:505.7px;height:39.6px;background:#f9e4e4"></div>
<div style="position:absolute;left:2542.5px;top:1242.2px;width:2.0px;height:41.6px;background:#d3d3dc"></div>
<div style="position:absolute;left:2036.8px;top:1281.8px;width:507.7px;height:2.0px;background:#d3d3dc"></div>
<div class="t" style="left:2042.8px;top:1252.5px;font-size:18.2px;color:#9a2525;font-weight:bold"><svg width="18" height="18" viewBox="0 0 18 18" style="vertical-align:-2px;margin-right:10px"><rect x="3" y="0.5" width="12" height="2.2" rx="0.6" fill="#5a3a22"/><rect x="3" y="15.3" width="12" height="2.2" rx="0.6" fill="#5a3a22"/><path d="M4.5 2.7 L13.5 2.7 Q13 7 9.6 9 Q13 11 13.5 15.3 L4.5 15.3 Q5 11 8.4 9 Q5 7 4.5 2.7 Z" fill="#f2f2f2" stroke="#aaa" stroke-width="0.6"/><path d="M6.2 5 L11.8 5 Q11 7.5 9 8.6 Q7 7.5 6.2 5 Z" fill="#d8a25e"/><path d="M5.5 15 Q6.5 12 9 11.5 Q11.5 12 12.5 15 Z" fill="#c58a40"/></svg>Pendiente</div>
<div style="position:absolute;left:90.5px;top:1282.8px;width:74.9px;height:39.6px;background:#ece8fb"></div>
<div style="position:absolute;left:164.4px;top:1281.8px;width:2.0px;height:41.6px;background:#d3d3dc"></div>
<div style="position:absolute;left:89.5px;top:1321.4px;width:76.9px;height:2.0px;background:#d3d3dc"></div>
<div class="t" style="left:-272.1px;top:1292.0px;width:800px;text-align:center;font-size:20.5px;color:#4a2398;font-weight:bold">18</div>
<div style="position:absolute;left:165.4px;top:1282.8px;width:556.6px;height:39.6px;background:#fefbe9"></div>
<div style="position:absolute;left:721.0px;top:1281.8px;width:2.0px;height:41.6px;background:#d3d3dc"></div>
<div style="position:absolute;left:164.4px;top:1321.4px;width:558.6px;height:2.0px;background:#d3d3dc"></div>
<div class="t" style="left:170.4px;top:1292.1px;font-size:20.2px;color:#1c1a33;font-weight:bold">Transporte / traslado familia</div>
<div style="position:absolute;left:722.0px;top:1282.8px;width:489.3px;height:39.6px;background:#f3f3f6"></div>
<div style="position:absolute;left:1210.3px;top:1281.8px;width:2.0px;height:41.6px;background:#d3d3dc"></div>
<div style="position:absolute;left:721.0px;top:1321.4px;width:491.3px;height:2.0px;background:#d3d3dc"></div>
<div class="t" style="left:728.0px;top:1293.1px;font-size:18.2px;color:#6b6f78;font-style:italic">Uber / taxi</div>
<div style="position:absolute;left:1211.3px;top:1282.8px;width:344.5px;height:39.6px;background:#fefbe9"></div>
<div style="position:absolute;left:1554.8px;top:1281.8px;width:2.0px;height:41.6px;background:#d3d3dc"></div>
<div style="position:absolute;left:1210.3px;top:1321.4px;width:346.5px;height:2.0px;background:#d3d3dc"></div>
<div class="t" style="left:983.5px;top:1292.2px;width:800px;text-align:center;font-size:20px;color:#4a2398">$30,00</div>
<div style="position:absolute;left:1555.8px;top:1282.8px;width:332.2px;height:39.6px;background:#fefbe9"></div>
<div style="position:absolute;left:1887.0px;top:1281.8px;width:2.0px;height:41.6px;background:#d3d3dc"></div>
<div style="position:absolute;left:1554.8px;top:1321.4px;width:334.2px;height:2.0px;background:#d3d3dc"></div>
<div class="t" style="left:1321.9px;top:1291.2px;width:800px;text-align:center;font-size:22px;color:#4a2398;font-weight:bold">$30,00</div>
<div style="position:absolute;left:1888.0px;top:1282.8px;width:149.8px;height:39.6px;background:#fefbe9"></div>
<div style="position:absolute;left:2036.8px;top:1281.8px;width:2.0px;height:41.6px;background:#d3d3dc"></div>
<div style="position:absolute;left:1887.0px;top:1321.4px;width:151.8px;height:2.0px;background:#d3d3dc"></div>
<div class="t" style="left:1562.9px;top:1292.2px;width:800px;text-align:center;font-size:20px;color:#245c3b;font-weight:bold"></div>
<div style="position:absolute;left:2037.8px;top:1282.8px;width:505.7px;height:39.6px;background:#f9e4e4"></div>
<div style="position:absolute;left:2542.5px;top:1281.8px;width:2.0px;height:41.6px;background:#d3d3dc"></div>
<div style="position:absolute;left:2036.8px;top:1321.4px;width:507.7px;height:2.0px;background:#d3d3dc"></div>
<div class="t" style="left:2042.8px;top:1292.1px;font-size:18.2px;color:#9a2525;font-weight:bold"><svg width="18" height="18" viewBox="0 0 18 18" style="vertical-align:-2px;margin-right:10px"><rect x="3" y="0.5" width="12" height="2.2" rx="0.6" fill="#5a3a22"/><rect x="3" y="15.3" width="12" height="2.2" rx="0.6" fill="#5a3a22"/><path d="M4.5 2.7 L13.5 2.7 Q13 7 9.6 9 Q13 11 13.5 15.3 L4.5 15.3 Q5 11 8.4 9 Q5 7 4.5 2.7 Z" fill="#f2f2f2" stroke="#aaa" stroke-width="0.6"/><path d="M6.2 5 L11.8 5 Q11 7.5 9 8.6 Q7 7.5 6.2 5 Z" fill="#d8a25e"/><path d="M5.5 15 Q6.5 12 9 11.5 Q11.5 12 12.5 15 Z" fill="#c58a40"/></svg>Día del evento</div>
<div style="position:absolute;left:90.5px;top:1322.4px;width:74.9px;height:39.6px;background:#ece8fb"></div>
<div style="position:absolute;left:164.4px;top:1321.4px;width:2.0px;height:41.6px;background:#d3d3dc"></div>
<div style="position:absolute;left:89.5px;top:1361.0px;width:76.9px;height:2.0px;background:#d3d3dc"></div>
<div class="t" style="left:-272.1px;top:1331.6px;width:800px;text-align:center;font-size:20.5px;color:#4a2398;font-weight:bold">19</div>
<div style="position:absolute;left:165.4px;top:1322.4px;width:556.6px;height:39.6px;background:#fefbe9"></div>
<div style="position:absolute;left:721.0px;top:1321.4px;width:2.0px;height:41.6px;background:#d3d3dc"></div>
<div style="position:absolute;left:164.4px;top:1361.0px;width:558.6px;height:2.0px;background:#d3d3dc"></div>
<div class="t" style="left:170.4px;top:1331.8px;font-size:20.2px;color:#1c1a33;font-weight:bold">Fondo de imprevistos (10%)</div>
<div style="position:absolute;left:722.0px;top:1322.4px;width:489.3px;height:39.6px;background:#f3f3f6"></div>
<div style="position:absolute;left:1210.3px;top:1321.4px;width:2.0px;height:41.6px;background:#d3d3dc"></div>
<div style="position:absolute;left:721.0px;top:1361.0px;width:491.3px;height:2.0px;background:#d3d3dc"></div>
<div class="t" style="left:728.0px;top:1332.7px;font-size:18.2px;color:#6b6f78;font-style:italic">Reserva</div>
<div style="position:absolute;left:1211.3px;top:1322.4px;width:344.5px;height:39.6px;background:#fefbe9"></div>
<div style="position:absolute;left:1554.8px;top:1321.4px;width:2.0px;height:41.6px;background:#d3d3dc"></div>
<div style="position:absolute;left:1210.3px;top:1361.0px;width:346.5px;height:2.0px;background:#d3d3dc"></div>
<div class="t" style="left:983.5px;top:1331.9px;width:800px;text-align:center;font-size:20px;color:#4a2398">$130,00</div>
<div style="position:absolute;left:1555.8px;top:1322.4px;width:332.2px;height:39.6px;background:#fefbe9"></div>
<div style="position:absolute;left:1887.0px;top:1321.4px;width:2.0px;height:41.6px;background:#d3d3dc"></div>
<div style="position:absolute;left:1554.8px;top:1361.0px;width:334.2px;height:2.0px;background:#d3d3dc"></div>
<div class="t" style="left:1321.9px;top:1330.9px;width:800px;text-align:center;font-size:22px;color:#4a2398;font-weight:bold">$130,00</div>
<div style="position:absolute;left:1888.0px;top:1322.4px;width:149.8px;height:39.6px;background:#fefbe9"></div>
<div style="position:absolute;left:2036.8px;top:1321.4px;width:2.0px;height:41.6px;background:#d3d3dc"></div>
<div style="position:absolute;left:1887.0px;top:1361.0px;width:151.8px;height:2.0px;background:#d3d3dc"></div>
<div class="t" style="left:1562.9px;top:1331.9px;width:800px;text-align:center;font-size:20px;color:#245c3b;font-weight:bold"></div>
<div style="position:absolute;left:2037.8px;top:1322.4px;width:505.7px;height:39.6px;background:#fdf7cd"></div>
<div style="position:absolute;left:2542.5px;top:1321.4px;width:2.0px;height:41.6px;background:#d3d3dc"></div>
<div style="position:absolute;left:2036.8px;top:1361.0px;width:507.7px;height:2.0px;background:#d3d3dc"></div>
<div class="t" style="left:2042.8px;top:1331.7px;font-size:18.2px;color:#e8a33a;font-weight:bold"><svg width="18" height="18" viewBox="0 0 18 18" style="vertical-align:-2px;margin-right:10px"><path d="M6 0.5 L12 0.5 L10.5 4 L7.5 4 Z" fill="#b8893a"/><path d="M7.5 4 Q2 7.5 2.5 13.5 Q3 17.5 9 17.5 Q15 17.5 15.5 13.5 Q16 7.5 10.5 4 Z" fill="#e0c07a" stroke="#9c7430" stroke-width="0.8"/><text x="9" y="14.5" font-size="9" text-anchor="middle" fill="#5a4214" font-family="Liberation Sans" font-weight="bold">$</text></svg>Reservado</div>
<div style="position:absolute;left:90.5px;top:1362.0px;width:74.9px;height:39.6px;background:#fefbe9"></div>
<div style="position:absolute;left:164.4px;top:1361.0px;width:2.0px;height:41.6px;background:#d3d3dc"></div>
<div style="position:absolute;left:89.5px;top:1400.7px;width:76.9px;height:2.0px;background:#d3d3dc"></div>
<div style="position:absolute;left:165.4px;top:1362.0px;width:556.6px;height:39.6px;background:#fefbe9"></div>
<div style="position:absolute;left:721.0px;top:1361.0px;width:2.0px;height:41.6px;background:#d3d3dc"></div>
<div style="position:absolute;left:164.4px;top:1400.7px;width:558.6px;height:2.0px;background:#d3d3dc"></div>
<div style="position:absolute;left:722.0px;top:1362.0px;width:489.3px;height:39.6px;background:#fefbe9"></div>
<div style="position:absolute;left:1210.3px;top:1361.0px;width:2.0px;height:41.6px;background:#d3d3dc"></div>
<div style="position:absolute;left:721.0px;top:1400.7px;width:491.3px;height:2.0px;background:#d3d3dc"></div>
<div style="position:absolute;left:1211.3px;top:1362.0px;width:344.5px;height:39.6px;background:#fefbe9"></div>
<div style="position:absolute;left:1554.8px;top:1361.0px;width:2.0px;height:41.6px;background:#d3d3dc"></div>
<div style="position:absolute;left:1210.3px;top:1400.7px;width:346.5px;height:2.0px;background:#d3d3dc"></div>
<div style="position:absolute;left:1555.8px;top:1362.0px;width:332.2px;height:39.6px;background:#fefbe9"></div>
<div style="position:absolute;left:1887.0px;top:1361.0px;width:2.0px;height:41.6px;background:#d3d3dc"></div>
<div style="position:absolute;left:1554.8px;top:1400.7px;width:334.2px;height:2.0px;background:#d3d3dc"></div>
<div style="position:absolute;left:1888.0px;top:1362.0px;width:149.8px;height:39.6px;background:#fefbe9"></div>
<div style="position:absolute;left:2036.8px;top:1361.0px;width:2.0px;height:41.6px;background:#d3d3dc"></div>
<div style="position:absolute;left:1887.0px;top:1400.7px;width:151.8px;height:2.0px;background:#d3d3dc"></div>
<div style="position:absolute;left:2037.8px;top:1362.0px;width:505.7px;height:39.6px;background:#fefbe9"></div>
<div style="position:absolute;left:2542.5px;top:1361.0px;width:2.0px;height:41.6px;background:#d3d3dc"></div>
<div style="position:absolute;left:2036.8px;top:1400.7px;width:507.7px;height:2.0px;background:#d3d3dc"></div>
<div style="position:absolute;left:70.0px;top:248.5px;width:21.5px;height:85.5px;border:2.2px solid #4a80e0"></div>
<div style="position:absolute;left:84.5px;top:327.0px;width:14.0px;height:14.0px;background:#2a56c6;border:1.6px solid #fff;border-radius:50%"></div>
<div style="position:absolute;left:0.0px;top:1386.0px;width:2560.0px;height:20.0px;background:#fff"></div>
<div style="position:absolute;left:0.0px;top:1386.0px;width:2560.0px;height:1.5px;background:#c7c7c7"></div>
<div style="position:absolute;left:0.0px;top:1386.0px;width:69.0px;height:20.0px;background:#f8f9fa"></div>
<div style="position:absolute;left:68.5px;top:1386.0px;width:1.5px;height:20.0px;background:#c7c7c7"></div>
<div style="position:absolute;left:72.7px;top:1388.4px;width:1447.3px;height:14.6px;background:#dadada;border-radius:7.3px"></div>
<div style="position:absolute;left:2496.0px;top:1387.0px;width:47.0px;height:19.0px;background:#f8f8f8"></div>
<div style="position:absolute;left:2496.0px;top:1387.0px;width:1.5px;height:19.0px;background:#d0d0d0"></div>
<div style="position:absolute;left:2520.5px;top:1387.0px;width:1.5px;height:19.0px;background:#d0d0d0"></div>
<div style="position:absolute;left:2542.5px;top:1384.0px;width:2.0px;height:22.0px;background:#c7c7c7"></div>
<div class="ic" style="left:2504px;top:1391px;width:0;height:0;border-top:5px solid transparent;border-bottom:5px solid transparent;border-right:6px solid #8a8a8a"></div>
<div class="ic" style="left:2530px;top:1391px;width:0;height:0;border-top:5px solid transparent;border-bottom:5px solid transparent;border-left:6px solid #8a8a8a"></div>
<div style="position:absolute;left:2543.5px;top:248.0px;width:16.5px;height:1138.0px;background:#fff"></div>
<div style="position:absolute;left:2543.0px;top:248.0px;width:1.5px;height:1138.0px;background:#c7c7c7"></div>
<div style="position:absolute;left:2546.2px;top:250.0px;width:16.0px;height:39.0px;background:#dadada;border-radius:8px"></div>
<div style="position:absolute;left:2544.5px;top:1337.0px;width:15.5px;height:49.0px;background:#f8f8f8"></div>
<div style="position:absolute;left:2544.5px;top:1337.0px;width:15.5px;height:1.5px;background:#d0d0d0"></div>
<div style="position:absolute;left:2544.5px;top:1361.5px;width:15.5px;height:1.5px;background:#d0d0d0"></div>
<div class="ic" style="left:2547px;top:1345px;width:0;height:0;border-left:5px solid transparent;border-right:5px solid transparent;border-bottom:6px solid #8a8a8a"></div>
<div class="ic" style="left:2547px;top:1371px;width:0;height:0;border-left:5px solid transparent;border-right:5px solid transparent;border-top:6px solid #8a8a8a"></div>
<div style="position:absolute;left:2544.5px;top:213.0px;width:15.5px;height:33.5px;background:#f8f9fa"></div>
<div style="position:absolute;left:0.0px;top:1405.0px;width:2560.0px;height:2.0px;background:#c7c7c7"></div>
<div style="position:absolute;left:0.0px;top:1407.0px;width:2560.0px;height:55.0px;background:#f9fbfd"></div>
<svg class="ic" style="left:33.0px;top:19.5px" width="38.0" height="52.0" viewBox="0 0 38 52" fill="#444746"><path d="M4 0 H25 L38 13 V48 A4 4 0 0 1 34 52 H4 A4 4 0 0 1 0 48 V4 A4 4 0 0 1 4 0 Z" fill="#4fab58"/><path d="M25 0 L38 13 H25 Z" fill="#3a853d"/><rect x="6.5" y="20.5" width="25" height="18" fill="#fff"/><rect x="9.5" y="23.5" width="8" height="5" fill="#4caf50"/><rect x="20.5" y="23.5" width="8" height="5" fill="#4caf50"/><rect x="9.5" y="30.5" width="8" height="5" fill="#4caf50"/><rect x="20.5" y="30.5" width="8" height="5" fill="#4caf50"/></svg>
<div class="t" style="left:91.5px;top:18.0px;font-size:27.4px;color:#1f1f1f;letter-spacing:-0.2px">Plantilla_38_Presupuesto_Evento</div>
<div style="position:absolute;left:512.5px;top:16.0px;width:66.5px;height:30.0px;background:#2d6a35;border-radius:6px"></div>
<div class="t" style="left:512.5px;top:22.5px;width:66.5px;text-align:center;font-size:18.5px;color:#fff">.XLSX</div>
<svg class="ic" style="left:601.5px;top:17.0px" width="28.0" height="28.0" viewBox="0 0 24 24" fill="#444746"><path d="M22 9.24l-7.19-.62L12 2 9.19 8.63 2 9.24l5.46 4.73L5.82 21 12 17.27 18.18 21l-1.63-7.03L22 9.24zM12 15.4l-3.76 2.27 1-4.28-3.32-2.88 4.38-.38L12 6.1l1.71 4.04 4.38.38-3.32 2.88 1 4.28L12 15.4z"/></svg>
<svg class="ic" style="left:650.0px;top:16.0px" width="29.0" height="29.0" viewBox="0 0 24 24" fill="#444746"><path d="M20 6h-8l-2-2H4c-1.1 0-1.99.9-1.99 2L2 18c0 1.1.9 2 2 2h16c1.1 0 2-.9 2-2V8c0-1.1-.9-2-2-2zm0 12H4V6h5.17l2 2H20v10zm-7.84-6H8v2h4.16l-1.59 1.59L11.99 17 16 13.01 11.99 9l-1.41 1.41L12.16 12z"/></svg>
<svg class="ic" style="left:700.0px;top:17.5px" width="27.0" height="27.0" viewBox="0 0 24 24" fill="#444746"><path d="M19.35 10.04C18.67 6.59 15.64 4 12 4 9.11 4 6.6 5.64 5.35 8.04 2.34 8.36 0 10.91 0 14c0 3.31 2.69 6 6 6h13c2.76 0 5-2.24 5-5 0-2.64-2.05-4.78-4.65-4.96zM19 18H6c-2.21 0-4-1.79-4-4 0-2.05 1.53-3.76 3.56-3.97l1.07-.11.5-.95C8.08 7.14 9.94 6 12 6c2.62 0 4.88 1.86 5.39 4.43l.3 1.5 1.53.11c1.56.1 2.78 1.41 2.78 2.96 0 1.65-1.35 3-3 3zm-9-3.82l-2.09-2.09L6.5 13.5 10 17l6.01-6.01-1.41-1.41z"/></svg>
<div class="t" style="left:94.5px;top:54.6px;font-size:22.6px;color:#1f1f1f">Archivo</div>
<div class="t" style="left:194.0px;top:54.6px;font-size:22.6px;color:#1f1f1f">Editar</div>
<div class="t" style="left:277.0px;top:54.6px;font-size:22.6px;color:#1f1f1f">Ver</div>
<div class="t" style="left:334.5px;top:54.6px;font-size:22.6px;color:#1f1f1f">Insertar</div>
<div class="t" style="left:436.9px;top:54.6px;font-size:22.6px;color:#1f1f1f">Formato</div>
<div class="t" style="left:544.6px;top:54.6px;font-size:22.6px;color:#1f1f1f">Datos</div>
<div class="t" style="left:626.8px;top:54.6px;font-size:22.6px;color:#1f1f1f">Herramientas</div>
<div class="t" style="left:784.6px;top:54.6px;font-size:22.6px;color:#1f1f1f">Ayuda</div>
<svg class="ic" style="left:1898.5px;top:20.8px" width="40.0" height="40.0" viewBox="0 0 24 24" fill="#444746"><path d="M12 21q-3.45 0-6.012-2.287T3.05 13H5.1q.35 2.6 2.313 4.3T12 19q2.925 0 4.963-2.037T19 12t-2.037-4.962T12 5q-1.725 0-3.225.8T6.25 8H9v2H3V4h2v2.35q1.275-1.6 3.113-2.475T12 3q1.875 0 3.513.713t2.85 1.924t1.925 2.85T21 12t-.712 3.513t-1.925 2.85t-2.85 1.925T12 21m2.8-4.8L11 12.4V7h2v4.6l3.2 3.2z"/></svg>
<svg class="ic" style="left:1975.0px;top:23.0px" width="38.0" height="38.0" viewBox="0 0 24 24" fill="#444746"><path d="M21.99 4c0-1.1-.89-2-1.99-2H4c-1.1 0-2 .9-2 2v12c0 1.1.9 2 2 2h14l4 4-.01-18zM20 4v13.17L18.83 16H4V4h16zM6 12h12v2H6zm0-3h12v2H6zm0-3h12v2H6z"/></svg>
<svg class="ic" style="left:2061.0px;top:28.0px" width="33.0" height="27.0" viewBox="0 0 33 27" fill="none"><path d="M8.2 2.9 H21.8 A2.4 2.4 0 0 1 24.2 5.3 V22.2 A2.4 2.4 0 0 1 21.8 24.6 H4.3 A2.4 2.4 0 0 1 1.9 22.2 V9.2 Z" fill="none" stroke="#444746" stroke-width="2.8" stroke-linejoin="round"/><path d="M24 11 L32 5.4 V22.2 L24 16.6 Z" fill="#444746"/></svg>
<svg class="ic" style="left:2106.0px;top:36.0px" width="15.0" height="9.0" viewBox="0 0 15 9" fill="#444746"><path d="M1 1 L14 1 L7.5 8 Z" fill="#444746"/></svg>
<div style="position:absolute;left:2155.0px;top:10.5px;width:236.0px;height:61.0px;background:#c2e7ff;border-radius:31px"></div>
<div style="position:absolute;left:2339.0px;top:10.5px;width:2.0px;height:61.0px;background:#f9fbfd"></div>
<svg class="ic" style="left:2178.5px;top:26.5px" width="31.0" height="31.0" viewBox="0 0 24 24" fill="#0a1f33"><path d="M18 8h-1V6c0-2.76-2.24-5-5-5S7 3.24 7 6v2H6c-1.1 0-2 .9-2 2v10c0 1.1.9 2 2 2h12c1.1 0 2-.9 2-2V10c0-1.1-.9-2-2-2zM9 6c0-1.66 1.34-3 3-3s3 1.34 3 3v2H9V6zm9 14H6V10h12v10zm-6-3c1.1 0 2-.9 2-2s-.9-2-2-2-2 .9-2 2 .9 2 2 2z"/></svg>
<div class="t" style="left:2221.0px;top:28.6px;font-size:23.8px;color:#0b3a62;-webkit-text-stroke:0.35px #0b3a62">Compartir</div>
<svg class="ic" style="left:2358.0px;top:38.0px" width="14.0" height="9.0" viewBox="0 0 14 9" fill="#444746"><path d="M1 1 L13 1 L7 8 Z" fill="#0a1f33"/></svg>
<svg class="ic" style="left:2417.5px;top:25.5px" width="31.5" height="31.5" viewBox="0 0 32 32" fill="#444746"><path d="M16 0 C17 9 23 15 32 16 C23 17 17 23 16 32 C15 23 9 17 0 16 C9 15 15 9 16 0 Z" fill="#444746"/></svg>
<div class="ic" style="left:2482px;top:16.5px;width:49px;height:49px;border-radius:50%;background:radial-gradient(circle at 50% 45%,#f4ecd2 0%,#e2d4a6 60%,#cdb97e 100%)"></div>
<svg class="ic" style="left:2494.0px;top:28.0px" width="26.0" height="29.0" viewBox="0 0 26 29" fill="none"><ellipse cx="12.8" cy="2.6" rx="3.8" ry="2.1" fill="#3fb54a"/><path d="M10.5 4 L15 4 L14.2 6.5 L11.3 6.5 Z" fill="#3fb54a"/><path d="M10.5 6 Q4.5 9.5 5.5 17.8 L20.2 17.8 Q21.2 9.5 15.2 6 Z" fill="#3fb54a"/><text x="12.9" y="15.6" font-size="10.5" text-anchor="middle" fill="#fff" font-family="Liberation Serif" font-weight="bold">S</text><text x="13" y="24.3" font-size="6.6" text-anchor="middle" fill="#3a3a30" font-family="Liberation Serif" letter-spacing="0.2">AVANZA</text><path d="M1.5 26.8 H24.5" stroke="#8a8670" stroke-width="0.7" stroke-dasharray="1 0.6" opacity="0.6"/></svg>
<div style="position:absolute;left:25.0px;top:94.0px;width:2512.0px;height:61.0px;background:#f0f3f8;border-radius:31px"></div>
<div style="position:absolute;left:38.0px;top:103.5px;width:153.0px;height:43.0px;background:#fff;border-radius:22px"></div>
<svg class="ic" style="left:50.0px;top:110.0px" width="30.0" height="30.0" viewBox="0 0 24 24" fill="#444746"><path d="M15.5 14h-.79l-.28-.27C15.41 12.59 16 11.11 16 9.5 16 5.91 13.09 3 9.5 3S3 5.91 3 9.5 5.91 16 9.5 16c1.61 0 3.09-.59 4.23-1.57l.27.28v.79l5 4.99L20.49 19l-4.99-5zm-6 0C7.01 14 5 11.99 5 9.5S7.01 5 9.5 5 14 7.01 14 9.5 11.99 14 9.5 14z"/></svg>
<div class="t" style="left:93.0px;top:114.0px;font-size:22px;color:#444746;letter-spacing:0.4px">Menús</div>
<svg class="ic" style="left:204.0px;top:116.0px" width="24.0" height="22.0" viewBox="0 0 24 22" fill="none"><path d="M6 2 L2 6 L6 10" fill="none" stroke="#444746" stroke-width="2.4" stroke-linejoin="round"/><path d="M2.5 6 H14 A6 6 0 0 1 14 18 H8" fill="none" stroke="#444746" stroke-width="2.4"/></svg>
<svg class="ic" style="left:253.0px;top:116.0px" width="24.0" height="22.0" viewBox="0 0 24 22" fill="none"><path d="M18 2 L22 6 L18 10" fill="none" stroke="#444746" stroke-width="2.4" stroke-linejoin="round"/><path d="M21.5 6 H10 A6 6 0 0 0 10 18 H16" fill="none" stroke="#444746" stroke-width="2.4"/></svg>
<svg class="ic" style="left:299.0px;top:111.0px" width="30.0" height="30.0" viewBox="0 0 24 24" fill="#444746"><path d="M19 8h-1V3H6v5H5c-1.66 0-3 1.34-3 3v6h4v4h12v-4h4v-6c0-1.66-1.34-3-3-3zM8 5h8v3H8V5zm8 12v2H8v-4h8v2zm2-2v-2H6v2H4v-4c0-.55.45-1 1-1h14c.55 0 1 .45 1 1v4h-2z"/></svg>
<svg class="ic" style="left:350.0px;top:114.0px" width="23.0" height="27.0" viewBox="0 0 23 27" fill="none"><rect x="2" y="1.5" width="19" height="7" rx="1.5" fill="none" stroke="#444746" stroke-width="2.4"/><path d="M2 5 H0.8 V12.5 H11.5 V17" fill="none" stroke="#444746" stroke-width="2.4"/><rect x="8.5" y="17" width="6" height="9" rx="1" fill="none" stroke="#444746" stroke-width="2.4"/></svg>
<div class="t" style="left:400.0px;top:115.5px;font-size:22.6px;color:#444746;letter-spacing:0.4px">100%</div>
<svg class="ic" style="left:477.8px;top:123.1px" width="11.5" height="5.8" viewBox="0 0 11.5 5.8" fill="none"><path d="M0 0 L11.5 0 L5.75 5.8 Z" fill="#444746"/></svg>
<div style="position:absolute;left:509.5px;top:109.5px;width:1.5px;height:31.0px;background:#c7c7c7"></div>
<div class="t" style="left:530.5px;top:113.0px;font-size:23px;color:#444746">€</div>
<div class="t" style="left:580.0px;top:114.0px;font-size:21px;color:#444746">%</div>
<div class="t" style="left:623.0px;top:109.0px;font-size:19px;color:#444746;font-weight:bold;letter-spacing:-1px">.0</div>
<svg class="ic" style="left:636.0px;top:128.0px" width="15.0" height="10.0" viewBox="0 0 15 10" fill="none"><path d="M14 5 H3 M6 1 L2 5 L6 9" fill="none" stroke="#444746" stroke-width="2.2"/></svg>
<div class="t" style="left:672.0px;top:109.0px;font-size:19px;color:#444746;font-weight:bold;letter-spacing:-1px">.00</div>
<svg class="ic" style="left:685.0px;top:128.0px" width="15.0" height="10.0" viewBox="0 0 15 10" fill="none"><path d="M1 5 H12 M9 1 L13 5 L9 9" fill="none" stroke="#444746" stroke-width="2.2"/></svg>
<div class="t" style="left:722.0px;top:116.0px;font-size:18.5px;color:#444746;letter-spacing:-0.5px">123</div>
<div style="position:absolute;left:767.0px;top:109.5px;width:1.5px;height:31.0px;background:#c7c7c7"></div>
<div class="t" style="left:791.0px;top:114.0px;font-size:22.5px;color:#444746;letter-spacing:0.5px">Calibri</div>
<svg class="ic" style="left:893.8px;top:123.1px" width="11.5" height="5.8" viewBox="0 0 11.5 5.8" fill="none"><path d="M0 0 L11.5 0 L5.75 5.8 Z" fill="#444746"/></svg>
<div style="position:absolute;left:929.0px;top:109.5px;width:1.5px;height:31.0px;background:#c7c7c7"></div>
<div style="position:absolute;left:946.0px;top:124.0px;width:15.0px;height:2.4px;background:#444746"></div>
<div style="position:absolute;left:978.0px;top:107.5px;width:50.5px;height:35.0px;border:1.6px solid #747775;border-radius:7px"></div>
<div class="t" style="left:978.0px;top:115.5px;width:50.5px;text-align:center;font-size:21px;color:#1f1f1f">11</div>
<svg class="ic" style="left:1039.0px;top:113.0px" width="24.0" height="24.0" viewBox="0 0 24 24" fill="#444746"><path d="M19 13h-6v6h-2v-6H5v-2h6V5h2v6h6v2z"/></svg>
<div style="position:absolute;left:1076.5px;top:109.5px;width:1.5px;height:31.0px;background:#c7c7c7"></div>
<svg class="ic" style="left:1092.0px;top:111.0px" width="30.0" height="30.0" viewBox="0 0 24 24" fill="#444746"><path d="M15.6 10.79c.97-.67 1.65-1.77 1.65-2.79 0-2.26-1.75-4-4-4H7v14h7.04c2.09 0 3.71-1.7 3.71-3.79 0-1.52-.86-2.82-2.15-3.42zM10 6.5h3c.83 0 1.5.67 1.5 1.5s-.67 1.5-1.5 1.5h-3v-3zm3.5 9H10v-3h3.5c.83 0 1.5.67 1.5 1.5s-.67 1.5-1.5 1.5z"/></svg>
<svg class="ic" style="left:1141.0px;top:111.0px" width="30.0" height="30.0" viewBox="0 0 24 24" fill="#444746"><path d="M10 4v3h2.21l-3.42 8H6v3h8v-3h-2.21l3.42-8H18V4z"/></svg>
<svg class="ic" style="left:1191.0px;top:116.0px" width="26.0" height="20.0" viewBox="0 0 26 20" fill="none"><path d="M0 9.5 H26" stroke="#444746" stroke-width="2.4"/><path d="M18.5 5 C18 2 15.5 1.3 13 1.3 C10 1.3 7.5 2.8 7.5 5.2" fill="none" stroke="#444746" stroke-width="2.6"/><path d="M7.5 14 C8 17 10.5 18.7 13 18.7 C15.5 18.7 18.5 17.5 18.5 14" fill="none" stroke="#444746" stroke-width="2.6"/></svg>
<div class="t" style="left:1245.5px;top:115.0px;font-size:19px;color:#444746">A</div>
<div style="position:absolute;left:1237.0px;top:134.0px;width:35.5px;height:6.0px;background:#000"></div>
<div style="position:absolute;left:1285.5px;top:109.5px;width:1.5px;height:31.0px;background:#c7c7c7"></div>
<svg class="ic" style="left:1303.0px;top:109.0px" width="26.0" height="22.0" viewBox="0 0 26 22" fill="none"><path d="M3 1 L6 4 M11 2 L2 11 L9 18 L18 9 Z" fill="none" stroke="#444746" stroke-width="2.4" stroke-linejoin="round"/><path d="M3.5 10.5 H16.5 L9 18 Z" fill="#444746"/><path d="M22 11 Q24.5 15 24.5 16.5 A2.5 2.5 0 0 1 19.5 16.5 Q19.5 15 22 11 Z" fill="#444746"/></svg>
<div style="position:absolute;left:1299.5px;top:134.5px;width:35.5px;height:5.5px;background:#fff"></div>
<svg class="ic" style="left:1355.0px;top:113.0px" width="27.0" height="27.0" viewBox="0 0 24 24" fill="#444746"><path d="M3 3v18h18V3H3zm8 16H5v-6h6v6zm0-8H5V5h6v6zm8 8h-6v-6h6v6zm0-8h-6V5h6v6z"/></svg>
<svg class="ic" style="left:1395.0px;top:105.0px" width="40.0" height="43.0" viewBox="0 0 40 43" fill="none"><g fill="none" stroke="#adb0b3" stroke-width="1.9"><path d="M21.3 12 H15 V18 M15 25.2 V31 H21.3 M27.6 12 H34 V18 M34 25.2 V31 H27.6"/><path d="M12.3 21.6 H21.2 M17.9 17.9 L21.6 21.6 L17.9 25.3 M36.8 21.6 H27.4 M31 17.9 L27.3 21.6 L31 25.3"/></g></svg>
<svg class="ic" style="left:1445.5px;top:123.2px" width="11.5" height="5.8" viewBox="0 0 11.5 5.8" fill="none"><path d="M0 0 L11.5 0 L5.75 5.8 Z" fill="#adb0b3"/></svg>
<div style="position:absolute;left:1467.0px;top:109.5px;width:1.5px;height:31.0px;background:#c7c7c7"></div>
<svg class="ic" style="left:1478.0px;top:110.0px" width="32.0" height="32.0" viewBox="0 0 24 24" fill="#444746"><path d="M15 15H3v2h12v-2zm0-8H3v2h12V7zM3 13h18v-2H3v2zm0 8h18v-2H3v2zM3 3v2h18V3H3z"/></svg>
<svg class="ic" style="left:1515.8px;top:123.1px" width="11.5" height="5.8" viewBox="0 0 11.5 5.8" fill="none"><path d="M0 0 L11.5 0 L5.75 5.8 Z" fill="#444746"/></svg>
<svg class="ic" style="left:1542.0px;top:111.0px" width="30.0" height="30.0" viewBox="0 0 24 24" fill="#444746"><path d="M16 13h-3V3h-2v10H8l4 4 4-4zM4 19v2h16v-2H4z"/></svg>
<svg class="ic" style="left:1578.2px;top:123.1px" width="11.5" height="5.8" viewBox="0 0 11.5 5.8" fill="none"><path d="M0 0 L11.5 0 L5.75 5.8 Z" fill="#444746"/></svg>
<svg class="ic" style="left:1607.0px;top:115.0px" width="24.0" height="23.0" viewBox="0 0 24 23" fill="none"><g fill="none" stroke="#444746" stroke-width="2.3"><path d="M3.8 2.5 V20.4 M13.3 2.5 V7.5 M13.3 15 V20.4"/><path d="M8.2 11.4 H20.4 M16.9 7.7 L20.7 11.4 L16.9 15.1"/></g></svg>
<svg class="ic" style="left:1640.8px;top:123.1px" width="11.5" height="5.8" viewBox="0 0 11.5 5.8" fill="none"><path d="M0 0 L11.5 0 L5.75 5.8 Z" fill="#444746"/></svg>
<svg class="ic" style="left:1670.0px;top:114.0px" width="25.0" height="24.0" viewBox="0 0 25 24" fill="none"><g fill="none" stroke="#444746" stroke-width="2.1"><path d="M5 15.6 L10.8 2.2 L16.6 15.6 M7 10.8 H14.6"/><path d="M2.8 19.3 H21.5 M18.4 16 L21.9 19.3 L18.4 22.6"/></g></svg>
<svg class="ic" style="left:1703.8px;top:123.1px" width="11.5" height="5.8" viewBox="0 0 11.5 5.8" fill="none"><path d="M0 0 L11.5 0 L5.75 5.8 Z" fill="#444746"/></svg>
<div style="position:absolute;left:1727.5px;top:109.5px;width:1.5px;height:31.0px;background:#c7c7c7"></div>
<svg class="ic" style="left:1742.8px;top:111.5px" width="30.0" height="30.0" viewBox="0 0 24 24" fill="#444746"><path d="M3.9 12c0-1.71 1.39-3.1 3.1-3.1h4V7H7c-2.76 0-5 2.24-5 5s2.24 5 5 5h4v-1.9H7c-1.71 0-3.1-1.39-3.1-3.1zM8 13h8v-2H8v2zm9-6h-4v1.9h4c1.71 0 3.1 1.39 3.1 3.1s-1.39 3.1-3.1 3.1h-4V17h4c2.76 0 5-2.24 5-5s-2.24-5-5-5z"/></svg>
<svg class="ic" style="left:1790.0px;top:110.0px" width="34.0" height="32.0" viewBox="0 0 34 32" fill="none"><g fill="none" stroke="#444746" stroke-width="2.3" stroke-linejoin="round"><path d="M6.2 22.8 V7 A1.8 1.8 0 0 1 8 5.2 H26.8 A1.8 1.8 0 0 1 28.6 7 V21 A1.8 1.8 0 0 1 26.8 22.8 H10.8 L6.2 27.5 Z"/><path d="M17.4 9.2 V18.8 M12.6 14 H22.2"/></g></svg>
<svg class="ic" style="left:1840.0px;top:111.0px" width="30.0" height="30.0" viewBox="0 0 24 24" fill="#444746"><path d="M19 3H5c-1.1 0-2 .9-2 2v14c0 1.1.9 2 2 2h14c1.1 0 2-.9 2-2V5c0-1.1-.9-2-2-2zm0 16H5V5h14v14zM7 10h2v7H7zm4-3h2v10h-2zm4 6h2v4h-2z"/></svg>
<svg class="ic" style="left:1893.0px;top:115.0px" width="22.0" height="22.0" viewBox="0 0 22 22" fill="none"><path d="M3.2 3 H19.2 L11.2 12.5 Z" fill="none" stroke="#444746" stroke-width="2.3" stroke-linejoin="round"/><path d="M11.2 12 V19.6" stroke="#444746" stroke-width="2.6" stroke-linecap="round"/></svg>
<svg class="ic" style="left:1936.0px;top:113.0px" width="26.0" height="26.0" viewBox="0 0 26 26" fill="none"><path d="M1.5 20 V3 A1.5 1.5 0 0 1 3 1.5 H20" fill="none" stroke="#444746" stroke-width="2.4"/><rect x="6" y="6" width="18.5" height="18.5" rx="1.5" fill="none" stroke="#444746" stroke-width="2.4"/><path d="M6 12 H24.5 M6 18 H24.5 M12 12 V24.5 M18 12 V24.5" stroke="#444746" stroke-width="2"/></svg>
<svg class="ic" style="left:1971.8px;top:123.1px" width="11.5" height="5.8" viewBox="0 0 11.5 5.8" fill="none"><path d="M0 0 L11.5 0 L5.75 5.8 Z" fill="#444746"/></svg>
<svg class="ic" style="left:2008.0px;top:115.0px" width="18.0" height="23.0" viewBox="0 0 18 23" fill="none"><path d="M15.2 3.6 H3.4 L10.6 11.5 L3.4 19.4 H15.2" fill="none" stroke="#444746" stroke-width="2.6" stroke-linejoin="miter"/></svg>
<svg class="ic" style="left:2486.0px;top:121.0px" width="17.0" height="11.0" viewBox="0 0 17 11" fill="none"><path d="M1.5 9.5 L8.5 2.5 L15.5 9.5" fill="none" stroke="#444746" stroke-width="2.6"/></svg>
<div class="t" style="left:21.5px;top:177.6px;font-size:20.5px;color:#1f1f1f;letter-spacing:-1.6px">A1</div>
<svg class="ic" style="left:131.8px;top:187.1px" width="11.5" height="5.8" viewBox="0 0 11.5 5.8" fill="none"><path d="M0 0 L11.5 0 L5.75 5.8 Z" fill="#444746"/></svg>
<div style="position:absolute;left:161.5px;top:176.5px;width:1.5px;height:26.0px;background:#dadce0"></div>
<svg class="ic" style="left:160.0px;top:170.0px" width="60.0" height="40.0" viewBox="0 0 60 40" fill="none"><g stroke="#999" fill="none"><path d="M31.3 11.8 Q30.3 9.6 28.6 9.8 Q26.4 10.2 25.9 14 L24 26.5 Q23.3 30.2 20.8 29.6 Q19.6 29.2 19.9 27.8" stroke-width="2.3"/><path d="M22.3 16.2 H32.7 M34.3 16.2 H40.4 M27.2 25.8 H32.7 M34.3 25.8 H40.4" stroke-width="2.1"/><path d="M29.6 16.2 L37.6 25.8 M37.2 16.2 L29.6 25.8" stroke-width="2.4"/></g></svg>
<svg class="ic" style="left:86.0px;top:1427.5px" width="16.0" height="16.0" viewBox="0 0 16 16" fill="none"><path d="M8 0 V16 M0 8 H16" stroke="#444746" stroke-width="2.4"/></svg>
<svg class="ic" style="left:144.0px;top:1428.5px" width="22.0" height="15.0" viewBox="0 0 22 15" fill="none"><path d="M0 1.2 H22 M0 7.5 H22 M0 13.8 H22" stroke="#444746" stroke-width="2.4"/></svg>
<div style="position:absolute;left:641.0px;top:1407.0px;width:170.0px;height:55.0px;background:#dee3ec"></div>
<svg class="ic" style="left:225px;top:1424.5px" width="18" height="21" viewBox="0 0 18 21"><rect x="0.5" y="2" width="17" height="18.5" rx="2" fill="#c99656"/><rect x="2.3" y="4" width="13.4" height="14.8" rx="0.5" fill="#e8e8e8"/><rect x="5" y="0.5" width="8" height="4" rx="1.2" fill="#9a9a9a"/></svg>
<div class="t" style="left:252.5px;top:1424.5px;font-size:24px;color:#444746;font-weight:normal">Instrucciones</div>
<svg class="ic" style="left:412.5px;top:1432.5px" width="12.0" height="6.5" viewBox="0 0 12 6.5" fill="none"><path d="M0 0 L12 0 L6 6.5 Z" fill="#444746"/></svg>
<svg class="ic" style="left:462px;top:1426.5px" width="22" height="19" viewBox="0 0 22 19"><circle cx="8.5" cy="10.5" r="8" fill="#d6342c"/><circle cx="8.5" cy="10.5" r="5.6" fill="#fff"/><circle cx="8.5" cy="10.5" r="3.6" fill="#d6342c"/><circle cx="8.5" cy="10.5" r="1.5" fill="#fff"/><path d="M8.5 10.5 L18 2.5" stroke="#5b6b78" stroke-width="1.6"/><path d="M16 1 L21.5 0.5 L20 5.5 Z" fill="#4fa3d9"/></svg>
<div class="t" style="left:491.5px;top:1424.7px;font-size:22.6px;color:#444746;font-weight:normal">Mi Evento</div>
<svg class="ic" style="left:610.5px;top:1432.5px" width="12.0" height="6.5" viewBox="0 0 12 6.5" fill="none"><path d="M0 0 L12 0 L6 6.5 Z" fill="#444746"/></svg>
<svg class="ic" style="left:659px;top:1426px" width="22" height="19" viewBox="0 0 22 19"><path d="M3 9 L15 2 L20 11 L8 18 Z" fill="#d4e3b4" stroke="#8aa06a" stroke-width="0.9"/><path d="M6 10 L14 5.5 L17 10.5 L9 15 Z" fill="#b9d08e"/><circle cx="11.5" cy="10" r="2.6" fill="#c0902e"/><path d="M0.5 8 L3.5 7 M0 12 L4 11 M18 3 L21.5 1.5 M19 6 L22 5" stroke="#b5b5b5" stroke-width="1.4"/></svg>
<div class="t" style="left:687.5px;top:1424.5px;font-size:23.4px;color:#1a5fd0;font-weight:normal;-webkit-text-stroke:0.55px #1a5fd0">Gastos</div>
<svg class="ic" style="left:780.5px;top:1432.5px" width="12.0" height="6.5" viewBox="0 0 12 6.5" fill="none"><path d="M0 0 L12 0 L6 6.5 Z" fill="#1a5fd0"/></svg>
<svg class="ic" style="left:829px;top:1429px" width="22" height="17" viewBox="0 0 22 17"><circle cx="7" cy="4.5" r="3.8" fill="#3d5f8e"/><path d="M0 17 Q0 9.5 7 9.5 Q14 9.5 14 17 Z" fill="#3d5f8e"/><circle cx="15" cy="4.5" r="3.8" fill="#5a7fae"/><path d="M8 17 Q8 9.5 15 9.5 Q22 9.5 22 17 Z" fill="#5a7fae"/></svg>
<div class="t" style="left:858.0px;top:1424.5px;font-size:23.8px;color:#444746;font-weight:normal">Invitados</div>
<svg class="ic" style="left:972.0px;top:1432.5px" width="12.0" height="6.5" viewBox="0 0 12 6.5" fill="none"><path d="M0 0 L12 0 L6 6.5 Z" fill="#444746"/></svg>
<svg class="ic" style="left:1021px;top:1424.5px" width="21.5" height="21.5" viewBox="0 0 18 18"><defs><linearGradient id="gc2" x1="0" y1="0" x2="0" y2="1"><stop offset="0" stop-color="#79cf5a"/><stop offset="1" stop-color="#3d9a2c"/></linearGradient></defs><rect x="0" y="0" width="18" height="18" rx="3.5" fill="url(#gc2)"/><path d="M4 9.5 L7.6 13 L14 4.5" stroke="#fff" stroke-width="2.3" fill="none" stroke-linecap="round" stroke-linejoin="round"/></svg>
<div class="t" style="left:1050.0px;top:1424.5px;font-size:24px;color:#444746;font-weight:normal">Checklist</div>
<svg class="ic" style="left:1166.0px;top:1432.5px" width="12.0" height="6.5" viewBox="0 0 12 6.5" fill="none"><path d="M0 0 L12 0 L6 6.5 Z" fill="#444746"/></svg>
<svg class="ic" style="left:2513.0px;top:1430.0px" width="10.5" height="15.5" viewBox="0 0 10.5 15.5" fill="none"><path d="M9 1.2 L2.2 7.75 L9 14.3" fill="none" stroke="#444746" stroke-width="2.6"/></svg>
</body></html>
